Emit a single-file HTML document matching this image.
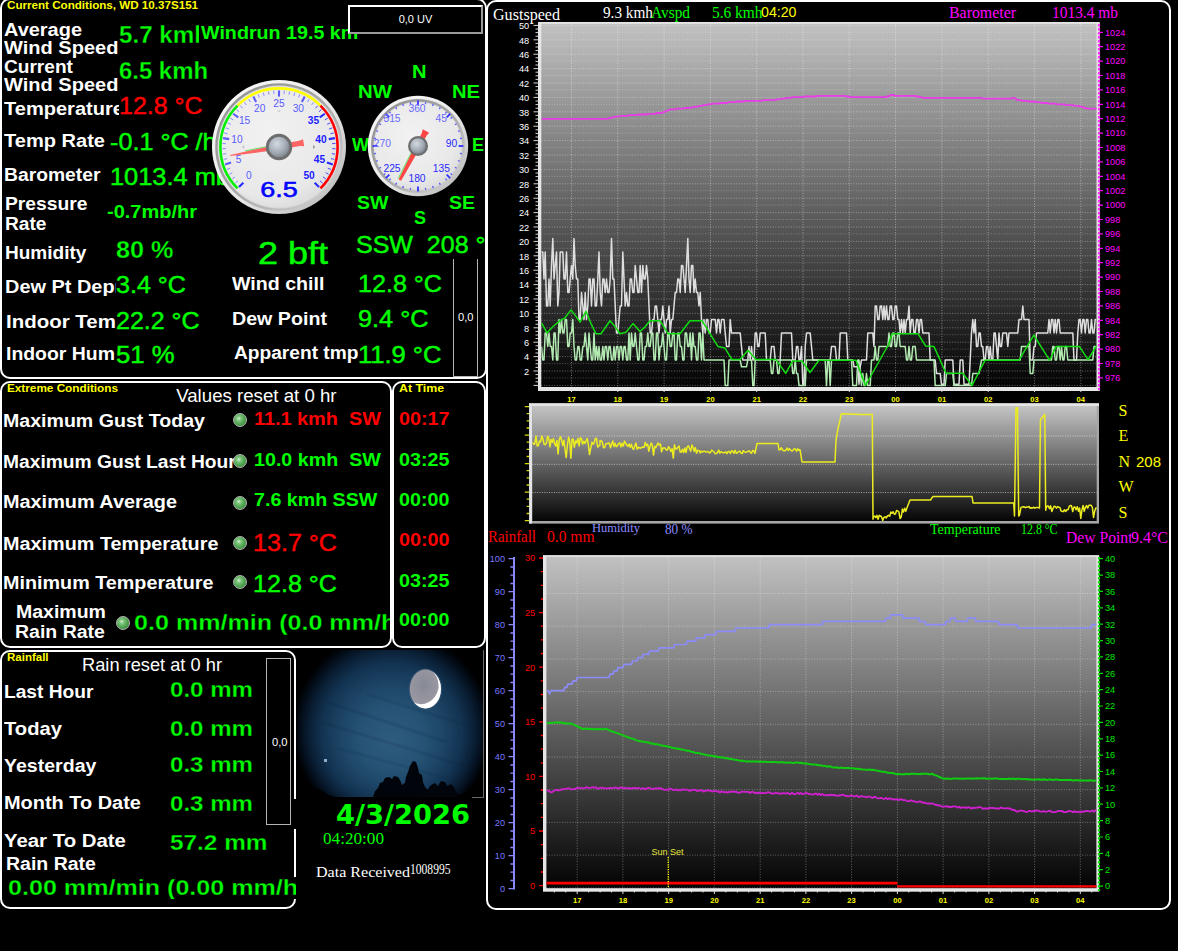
<!DOCTYPE html>
<html lang="en"><head><meta charset="utf-8"><title>Weather Display</title>
<style>
html,body{margin:0;padding:0;background:#000;}
body{width:1178px;height:951px;position:relative;overflow:hidden;font-family:"Liberation Sans",sans-serif;}
.t{position:absolute;white-space:pre;}
.sx{display:inline-block;transform-origin:0 50%;}
.abs{position:absolute;}
.er{-webkit-text-stroke:0.3px #000;}
.fat{-webkit-text-stroke-width:0.45px;}
.panel{position:absolute;box-sizing:border-box;border:2px solid #fff;border-radius:10px;background:#000;}
.led{position:absolute;border-radius:50%;box-sizing:border-box;border:1px solid #b4b4b4;background:radial-gradient(circle at 40% 38%,#d4f0d4 0,#7cc47c 22%,#4ea24e 55%,#357a35 100%);}
.uv{position:absolute;box-sizing:border-box;border:2px solid #fff;border-right-color:#9a9a9a;border-bottom-color:#9a9a9a;background:#000;color:#fff;font-size:11px;line-height:25px;text-align:center;}
.bar{position:absolute;box-sizing:border-box;border:1px solid #8c8c8c;background:#000;}
</style></head>
<body>
<div class="panel" style="left:485.5px;top:0;width:685.5px;height:910px"></div>
<div class="panel" style="left:0;top:-2px;width:486.5px;height:381px"></div>
<div class="t ttl" style="left:7.1px;top:0.0px;font-size:11px;line-height:11px;color:#ffff00;font-weight:bold;"><span class="sx" style="transform:scaleX(1.056)">Current Conditions, WD 10.37S151</span></div>
<div class="t " style="left:4.0px;top:20.5px;font-size:18.67px;line-height:18.67px;color:#ffffff;font-weight:bold;"><span class="sx" style="transform:scaleX(1.069)">Average</span></div>
<div class="t " style="left:4.0px;top:38.5px;font-size:18.67px;line-height:18.67px;color:#ffffff;font-weight:bold;"><span class="sx" style="transform:scaleX(1.073)">Wind Speed</span></div>
<div class="t " style="left:4.0px;top:57.5px;font-size:18.67px;line-height:18.67px;color:#ffffff;font-weight:bold;"><span class="sx" style="transform:scaleX(1.023)">Current</span></div>
<div class="t " style="left:4.0px;top:75.5px;font-size:18.67px;line-height:18.67px;color:#ffffff;font-weight:bold;"><span class="sx" style="transform:scaleX(1.073)">Wind Speed</span></div>
<div class="t " style="left:4.0px;top:132.0px;font-size:18.67px;line-height:18.67px;color:#ffffff;font-weight:bold;"><span class="sx" style="transform:scaleX(1.074)">Temp Rate</span></div>
<div class="t " style="left:4.0px;top:165.5px;font-size:18.67px;line-height:18.67px;color:#ffffff;font-weight:bold;"><span class="sx" style="transform:scaleX(1.033)">Barometer</span></div>
<div class="t " style="left:4.5px;top:194.8px;font-size:18.67px;line-height:18.67px;color:#ffffff;font-weight:bold;"><span class="sx" style="transform:scaleX(1.032)">Pressure</span></div>
<div class="t " style="left:4.5px;top:214.8px;font-size:18.67px;line-height:18.67px;color:#ffffff;font-weight:bold;"><span class="sx" style="transform:scaleX(1.025)">Rate</span></div>
<div class="t " style="left:4.5px;top:244.0px;font-size:18.67px;line-height:18.67px;color:#ffffff;font-weight:bold;"><span class="sx" style="transform:scaleX(1.020)">Humidity</span></div>
<div class="t " style="left:6.4px;top:344.9px;font-size:18.67px;line-height:18.67px;color:#ffffff;font-weight:bold;"><span class="sx" style="transform:scaleX(1.041)">Indoor Hum</span></div>
<div class="t " style="left:4.0px;top:100.1px;font-size:18.67px;line-height:18.67px;color:#ffffff;font-weight:bold;width:115.0px;overflow:hidden;"><span class="sx" style="transform:scaleX(1.074)">Temperature</span></div>
<div class="t " style="left:4.5px;top:277.5px;font-size:18.67px;line-height:18.67px;color:#ffffff;font-weight:bold;width:111.2px;overflow:hidden;"><span class="sx" style="transform:scaleX(1.068)">Dew Pt Depr</span></div>
<div class="t " style="left:6.4px;top:313.0px;font-size:18.67px;line-height:18.67px;color:#ffffff;font-weight:bold;width:109.3px;overflow:hidden;"><span class="sx" style="transform:scaleX(1.097)">Indoor Temp</span></div>
<div class="t er" style="left:119.2px;top:22.9px;font-size:24px;line-height:24px;color:#00ff00;font-weight:bold;width:80.2px;overflow:hidden;"><span class="sx" style="transform:scaleX(1.007)">5.7 kmh</span></div>
<div class="t " style="left:201.2px;top:23.8px;font-size:18.67px;line-height:18.67px;color:#00ff00;font-weight:bold;"><span class="sx" style="transform:scaleX(1.055)">Windrun 19.5 km</span></div>
<div class="t er" style="left:119.2px;top:58.7px;font-size:24px;line-height:24px;color:#00ff00;font-weight:bold;"><span class="sx" style="transform:scaleX(0.996)">6.5 kmh</span></div>
<div class="t fat" style="left:119.3px;top:93.6px;font-size:24px;line-height:24px;color:#ff0000;"><span class="sx" style="transform:scaleX(1.040)">12.8 °C</span></div>
<div class="t fat" style="left:110.3px;top:129.8px;font-size:24px;line-height:24px;color:#00ff00;"><span class="sx" style="transform:scaleX(1.049)">-0.1 °C /hr</span></div>
<div class="t fat" style="left:109.9px;top:164.6px;font-size:24px;line-height:24px;color:#00ff00;"><span class="sx" style="transform:scaleX(1.058)">1013.4 mb</span></div>
<div class="t " style="left:106.6px;top:202.7px;font-size:18.67px;line-height:18.67px;color:#00ff00;font-weight:bold;"><span class="sx" style="transform:scaleX(1.071)">-0.7mb/hr</span></div>
<div class="t er" style="left:116.0px;top:237.9px;font-size:24px;line-height:24px;color:#00ff00;font-weight:bold;"><span class="sx" style="transform:scaleX(1.051)">80 %</span></div>
<div class="t fat" style="left:116.0px;top:273.0px;font-size:24px;line-height:24px;color:#00ff00;"><span class="sx" style="transform:scaleX(1.045)">3.4 °C</span></div>
<div class="t fat" style="left:116.0px;top:308.9px;font-size:24px;line-height:24px;color:#00ff00;"><span class="sx" style="transform:scaleX(1.040)">22.2 °C</span></div>
<div class="t fat" style="left:115.6px;top:342.7px;font-size:24px;line-height:24px;color:#00ff00;"><span class="sx" style="transform:scaleX(1.069)">51 %</span></div>
<div class="t fat" style="left:257.8px;top:236.9px;font-size:32px;line-height:32px;color:#00ff00;"><span class="sx" style="transform:scaleX(1.124)">2 bft</span></div>
<div class="t fat" style="left:355.6px;top:232.7px;font-size:24px;line-height:24px;color:#00ff00;"><span class="sx" style="transform:scaleX(1.042)">SSW  208 °</span></div>
<div class="t " style="left:231.5px;top:275.3px;font-size:18.67px;line-height:18.67px;color:#ffffff;font-weight:bold;"><span class="sx" style="transform:scaleX(1.051)">Wind chill</span></div>
<div class="t " style="left:231.5px;top:309.6px;font-size:18.67px;line-height:18.67px;color:#ffffff;font-weight:bold;"><span class="sx" style="transform:scaleX(1.053)">Dew Point</span></div>
<div class="t " style="left:233.8px;top:344.0px;font-size:18.67px;line-height:18.67px;color:#ffffff;font-weight:bold;"><span class="sx" style="transform:scaleX(1.026)">Apparent tmp</span></div>
<div class="t fat" style="left:357.6px;top:271.6px;font-size:24px;line-height:24px;color:#00ff00;"><span class="sx" style="transform:scaleX(1.046)">12.8 °C</span></div>
<div class="t fat" style="left:357.6px;top:306.7px;font-size:24px;line-height:24px;color:#00ff00;"><span class="sx" style="transform:scaleX(1.053)">9.4 °C</span></div>
<div class="t fat" style="left:358.4px;top:342.7px;font-size:24px;line-height:24px;color:#00ff00;"><span class="sx" style="transform:scaleX(1.063)">11.9 °C</span></div>
<div class="t " style="left:411.7px;top:62.9px;font-size:18.67px;line-height:18.67px;color:#00ff00;font-weight:bold;"><span class="sx" style="transform:scaleX(1.075)">N</span></div>
<div class="t " style="left:357.5px;top:82.6px;font-size:18.67px;line-height:18.67px;color:#00ff00;font-weight:bold;"><span class="sx" style="transform:scaleX(1.093)">NW</span></div>
<div class="t " style="left:451.6px;top:82.6px;font-size:18.67px;line-height:18.67px;color:#00ff00;font-weight:bold;"><span class="sx" style="transform:scaleX(1.080)">NE</span></div>
<div class="t " style="left:351.8px;top:136.2px;font-size:18.67px;line-height:18.67px;color:#00ff00;font-weight:bold;"><span class="sx" style="transform:scaleX(0.965)">W</span></div>
<div class="t " style="left:472.2px;top:136.2px;font-size:18.67px;line-height:18.67px;color:#00ff00;font-weight:bold;"><span class="sx" style="transform:scaleX(0.964)">E</span></div>
<div class="t " style="left:357.2px;top:194.4px;font-size:18.67px;line-height:18.67px;color:#00ff00;font-weight:bold;"><span class="sx" style="transform:scaleX(1.047)">SW</span></div>
<div class="t " style="left:448.9px;top:194.4px;font-size:18.67px;line-height:18.67px;color:#00ff00;font-weight:bold;"><span class="sx" style="transform:scaleX(1.044)">SE</span></div>
<div class="t " style="left:414.0px;top:209.2px;font-size:18.67px;line-height:18.67px;color:#00ff00;font-weight:bold;"><span class="sx" style="transform:scaleX(0.964)">S</span></div>
<div class="uv" style="left:348px;top:5px;width:135px;height:29px"><span>0,0 UV</span></div>
<div class="bar" style="left:453px;top:258.5px;width:24.6px;height:118.5px;border-top:none;border-color:#b4b4b4"></div>
<div class="t " style="left:458.4px;top:312.0px;font-size:11px;line-height:11px;color:#ffffff;"><span class="sx" style="transform:scaleX(1.014)">0,0</span></div>
<div class="panel" style="left:0;top:381px;width:392.3px;height:267px"></div>
<div class="panel" style="left:391.9px;top:381px;width:94.6px;height:267px"></div>
<div class="t ttl" style="left:7.1px;top:383.0px;font-size:11px;line-height:11px;color:#ffff00;font-weight:bold;"><span class="sx" style="transform:scaleX(1.068)">Extreme Conditions</span></div>
<div class="t ttl" style="left:398.9px;top:383.0px;font-size:11px;line-height:11px;color:#ffff00;font-weight:bold;"><span class="sx" style="transform:scaleX(1.121)">At Time</span></div>
<div class="t " style="left:176.2px;top:386.5px;font-size:18.67px;line-height:18.67px;color:#ffffff;"><span class="sx" style="transform:scaleX(1.000)">Values reset at 0 hr</span></div>
<div class="t " style="left:3.4px;top:412.4px;font-size:18.67px;line-height:18.67px;color:#ffffff;font-weight:bold;"><span class="sx" style="transform:scaleX(1.049)">Maximum Gust Today</span></div>
<div class="t " style="left:3.4px;top:453.1px;font-size:18.67px;line-height:18.67px;color:#ffffff;font-weight:bold;"><span class="sx" style="transform:scaleX(1.030)">Maximum Gust Last Hour</span></div>
<div class="t " style="left:3.4px;top:493.4px;font-size:18.67px;line-height:18.67px;color:#ffffff;font-weight:bold;"><span class="sx" style="transform:scaleX(1.064)">Maximum Average</span></div>
<div class="t " style="left:3.4px;top:534.6px;font-size:18.67px;line-height:18.67px;color:#ffffff;font-weight:bold;"><span class="sx" style="transform:scaleX(1.062)">Maximum Temperature</span></div>
<div class="t " style="left:3.4px;top:574.4px;font-size:18.67px;line-height:18.67px;color:#ffffff;font-weight:bold;"><span class="sx" style="transform:scaleX(1.059)">Minimum Temperature</span></div>
<div class="t " style="left:16.2px;top:602.6px;font-size:18.67px;line-height:18.67px;color:#ffffff;font-weight:bold;"><span class="sx" style="transform:scaleX(1.045)">Maximum</span></div>
<div class="t " style="left:15.3px;top:623.3px;font-size:18.67px;line-height:18.67px;color:#ffffff;font-weight:bold;"><span class="sx" style="transform:scaleX(1.045)">Rain Rate</span></div>
<div class="t " style="left:254.4px;top:410.2px;font-size:18.67px;line-height:18.67px;color:#ff0000;font-weight:bold;"><span class="sx" style="transform:scaleX(1.064)">11.1 kmh  SW</span></div>
<div class="t " style="left:254.4px;top:450.5px;font-size:18.67px;line-height:18.67px;color:#00ff00;font-weight:bold;"><span class="sx" style="transform:scaleX(1.055)">10.0 kmh  SW</span></div>
<div class="t " style="left:254.4px;top:491.1px;font-size:18.67px;line-height:18.67px;color:#00ff00;font-weight:bold;"><span class="sx" style="transform:scaleX(1.053)">7.6 kmh SSW</span></div>
<div class="t fat" style="left:252.8px;top:530.9px;font-size:24px;line-height:24px;color:#ff0000;"><span class="sx" style="transform:scaleX(1.046)">13.7 °C</span></div>
<div class="t fat" style="left:252.8px;top:571.9px;font-size:24px;line-height:24px;color:#00ff00;"><span class="sx" style="transform:scaleX(1.046)">12.8 °C</span></div>
<div class="t er" style="left:134.2px;top:612.4px;font-size:22.5px;line-height:22.5px;color:#00ff00;font-weight:bold;width:256.3px;overflow:hidden;"><span class="sx" style="transform:scaleX(1.116)">0.0 mm/min (0.0 mm/hr</span></div>
<div class="led" style="left:232.8px;top:413.0px;width:14px;height:14px"></div>
<div class="led" style="left:232.8px;top:454.0px;width:14px;height:14px"></div>
<div class="led" style="left:232.8px;top:495.5px;width:14px;height:14px"></div>
<div class="led" style="left:232.8px;top:536.4px;width:14px;height:14px"></div>
<div class="led" style="left:232.8px;top:574.7px;width:14px;height:14px"></div>
<div class="led" style="left:115.7px;top:615.8px;width:14px;height:14px"></div>
<div class="t " style="left:398.7px;top:410.2px;font-size:18.67px;line-height:18.67px;color:#ff0000;font-weight:bold;"><span class="sx" style="transform:scaleX(1.058)">00:17</span></div>
<div class="t " style="left:398.7px;top:450.5px;font-size:18.67px;line-height:18.67px;color:#00ff00;font-weight:bold;"><span class="sx" style="transform:scaleX(1.058)">03:25</span></div>
<div class="t " style="left:398.7px;top:491.1px;font-size:18.67px;line-height:18.67px;color:#00ff00;font-weight:bold;"><span class="sx" style="transform:scaleX(1.058)">00:00</span></div>
<div class="t " style="left:398.7px;top:531.4px;font-size:18.67px;line-height:18.67px;color:#ff0000;font-weight:bold;"><span class="sx" style="transform:scaleX(1.058)">00:00</span></div>
<div class="t " style="left:398.7px;top:572.0px;font-size:18.67px;line-height:18.67px;color:#00ff00;font-weight:bold;"><span class="sx" style="transform:scaleX(1.058)">03:25</span></div>
<div class="t " style="left:398.7px;top:611.4px;font-size:18.67px;line-height:18.67px;color:#00ff00;font-weight:bold;"><span class="sx" style="transform:scaleX(1.058)">00:00</span></div>
<div class="panel" style="left:0;top:650px;width:296px;height:259px"></div>
<div class="t ttl" style="left:7.1px;top:652.0px;font-size:11px;line-height:11px;color:#ffff00;font-weight:bold;"><span class="sx" style="transform:scaleX(1.045)">Rainfall</span></div>
<div class="t " style="left:82.3px;top:655.5px;font-size:18.67px;line-height:18.67px;color:#ffffff;"><span class="sx" style="transform:scaleX(0.978)">Rain reset at 0 hr</span></div>
<div class="t " style="left:4.3px;top:682.9px;font-size:18.67px;line-height:18.67px;color:#ffffff;font-weight:bold;"><span class="sx" style="transform:scaleX(1.027)">Last Hour</span></div>
<div class="t " style="left:4.3px;top:719.8px;font-size:18.67px;line-height:18.67px;color:#ffffff;font-weight:bold;"><span class="sx" style="transform:scaleX(1.082)">Today</span></div>
<div class="t " style="left:4.3px;top:756.7px;font-size:18.67px;line-height:18.67px;color:#ffffff;font-weight:bold;"><span class="sx" style="transform:scaleX(1.048)">Yesterday</span></div>
<div class="t " style="left:4.3px;top:794.2px;font-size:18.67px;line-height:18.67px;color:#ffffff;font-weight:bold;"><span class="sx" style="transform:scaleX(1.068)">Month To Date</span></div>
<div class="t " style="left:4.3px;top:832.0px;font-size:18.67px;line-height:18.67px;color:#ffffff;font-weight:bold;"><span class="sx" style="transform:scaleX(1.092)">Year To Date</span></div>
<div class="t " style="left:6.2px;top:854.7px;font-size:18.67px;line-height:18.67px;color:#ffffff;font-weight:bold;"><span class="sx" style="transform:scaleX(1.045)">Rain Rate</span></div>
<div class="t er" style="left:170.3px;top:679.2px;font-size:22.4px;line-height:22.4px;color:#00ff00;font-weight:bold;"><span class="sx" style="transform:scaleX(1.075)">0.0 mm</span></div>
<div class="t er" style="left:170.3px;top:717.5px;font-size:22.4px;line-height:22.4px;color:#00ff00;font-weight:bold;"><span class="sx" style="transform:scaleX(1.075)">0.0 mm</span></div>
<div class="t er" style="left:170.3px;top:754.2px;font-size:22.4px;line-height:22.4px;color:#00ff00;font-weight:bold;"><span class="sx" style="transform:scaleX(1.075)">0.3 mm</span></div>
<div class="t er" style="left:170.3px;top:792.7px;font-size:22.4px;line-height:22.4px;color:#00ff00;font-weight:bold;"><span class="sx" style="transform:scaleX(1.075)">0.3 mm</span></div>
<div class="t er" style="left:170.3px;top:832.2px;font-size:22.4px;line-height:22.4px;color:#00ff00;font-weight:bold;"><span class="sx" style="transform:scaleX(1.088)">57.2 mm</span></div>
<div class="t er" style="left:7.6px;top:876.5px;font-size:22px;line-height:22px;color:#00ff00;font-weight:bold;width:288.4px;overflow:hidden;background:#000;"><span class="sx" style="transform:scaleX(1.141)">0.00 mm/min (0.00 mm/hr</span></div>
<div class="bar" style="left:266px;top:657.5px;width:25.2px;height:167px;border-color:#b4b4b4"></div>
<div class="t " style="left:272.0px;top:736.8px;font-size:11px;line-height:11px;color:#ffffff;"><span class="sx" style="transform:scaleX(1.014)">0,0</span></div>
<div class="abs" style="left:293px;top:799px;width:4px;height:30px;background:#000"></div>
<div class="t " style="left:336.2px;top:801.9px;font-size:26.6px;line-height:26.6px;color:#00ff00;font-weight:bold;font-family:'DejaVu Sans','Liberation Sans',sans-serif;"><span class="sx" style="transform:scaleX(1.027)">4/3/2026</span></div>
<div class="t " style="left:322.8px;top:831.3px;font-size:16px;line-height:16px;color:#00ff00;font-family:'Liberation Serif',serif;"><span class="sx" style="transform:scaleX(1.072)">04:20:00</span></div>
<div class="t " style="left:315.8px;top:865.4px;font-size:15px;line-height:15px;color:#ffffff;font-family:'Liberation Serif',serif;"><span class="sx" style="transform:scaleX(1.070)">Data Received</span></div>
<div class="t " style="left:409.7px;top:862.7px;font-size:14px;line-height:14px;color:#ffffff;font-family:'Liberation Serif',serif;"><span class="sx" style="transform:scaleX(0.827)">1008995</span></div>
<svg class="abs" style="left:209px;top:77px" width="140" height="140" viewBox="0 0 140 140" font-family="Liberation Sans, sans-serif"><defs>
<linearGradient id="gz1" x1="0" y1="0" x2="1" y2="1"><stop offset="0" stop-color="#fafafa"/><stop offset=".55" stop-color="#e8e8e8"/><stop offset="1" stop-color="#b0b0b0"/></linearGradient>
<linearGradient id="gz2" x1="0" y1="0" x2="1" y2="1"><stop offset="0" stop-color="#8e8e8e"/><stop offset=".5" stop-color="#a6a6a6"/><stop offset="1" stop-color="#d8d8d8"/></linearGradient>
<radialGradient id="gface" cx=".42" cy=".38" r=".75"><stop offset="0" stop-color="#f2f2f2"/><stop offset=".7" stop-color="#e8e8e8"/><stop offset="1" stop-color="#d2d2d2"/></radialGradient>
<radialGradient id="ghub" cx=".4" cy=".35" r=".7"><stop offset="0" stop-color="#d4dae0"/><stop offset=".6" stop-color="#a4acb6"/><stop offset="1" stop-color="#7c838c"/></radialGradient>
</defs><circle cx="70" cy="70" r="67" fill="url(#gz1)"/><circle cx="70" cy="70" r="63.8" fill="url(#gz2)"/><circle cx="70" cy="70" r="61.4" fill="#d6d6d6"/><circle cx="70" cy="70" r="60.6" fill="url(#gface)"/><path d="M28.56,111.44A58.6,58.6 0 0 1 28.56,28.56" stroke="#00f000" stroke-width="2.6" fill="none"/><path d="M28.56,28.56A58.6,58.6 0 0 1 111.44,28.56" stroke="#ffff00" stroke-width="2.6" fill="none"/><path d="M111.44,28.56A58.6,58.6 0 0 1 111.44,111.44" stroke="#ff0000" stroke-width="2.6" fill="none"/><line x1="34.36" y1="105.64" x2="29.98" y2="110.02" stroke="#2a2aff" stroke-width="2.1"/><line x1="29.01" y1="103.91" x2="26.39" y2="106.08" stroke="#8c8cff" stroke-width="1"/><line x1="26.00" y1="99.90" x2="23.19" y2="101.81" stroke="#8c8cff" stroke-width="1"/><line x1="23.38" y1="95.63" x2="20.40" y2="97.27" stroke="#8c8cff" stroke-width="1"/><line x1="21.18" y1="91.13" x2="18.06" y2="92.48" stroke="#8c8cff" stroke-width="1"/><line x1="22.07" y1="85.57" x2="16.17" y2="87.49" stroke="#5c5cff" stroke-width="2.1"/><line x1="18.08" y1="81.61" x2="14.76" y2="82.35" stroke="#8c8cff" stroke-width="1"/><line x1="17.22" y1="76.67" x2="13.85" y2="77.09" stroke="#8c8cff" stroke-width="1"/><line x1="16.83" y1="71.67" x2="13.43" y2="71.78" stroke="#8c8cff" stroke-width="1"/><line x1="16.90" y1="66.66" x2="13.51" y2="66.45" stroke="#8c8cff" stroke-width="1"/><line x1="20.22" y1="62.12" x2="14.10" y2="61.15" stroke="#5c5cff" stroke-width="2.1"/><line x1="18.47" y1="56.77" x2="15.18" y2="55.92" stroke="#8c8cff" stroke-width="1"/><line x1="19.95" y1="51.98" x2="16.75" y2="50.83" stroke="#8c8cff" stroke-width="1"/><line x1="21.86" y1="47.35" x2="18.79" y2="45.90" stroke="#8c8cff" stroke-width="1"/><line x1="24.21" y1="42.92" x2="21.28" y2="41.19" stroke="#8c8cff" stroke-width="1"/><line x1="29.23" y1="40.38" x2="24.21" y2="36.73" stroke="#5c5cff" stroke-width="2.1"/><line x1="30.09" y1="34.82" x2="27.54" y2="32.57" stroke="#8c8cff" stroke-width="1"/><line x1="33.58" y1="31.22" x2="31.25" y2="28.74" stroke="#8c8cff" stroke-width="1"/><line x1="37.39" y1="27.96" x2="35.31" y2="25.28" stroke="#8c8cff" stroke-width="1"/><line x1="41.49" y1="25.08" x2="39.67" y2="22.21" stroke="#8c8cff" stroke-width="1"/><line x1="47.12" y1="25.09" x2="44.30" y2="19.57" stroke="#5c5cff" stroke-width="2.1"/><line x1="50.42" y1="20.54" x2="49.16" y2="17.37" stroke="#8c8cff" stroke-width="1"/><line x1="55.16" y1="18.91" x2="54.21" y2="15.65" stroke="#8c8cff" stroke-width="1"/><line x1="60.03" y1="17.74" x2="59.39" y2="14.40" stroke="#8c8cff" stroke-width="1"/><line x1="64.99" y1="17.04" x2="64.67" y2="13.65" stroke="#8c8cff" stroke-width="1"/><line x1="70.00" y1="19.60" x2="70.00" y2="13.40" stroke="#5c5cff" stroke-width="2.1"/><line x1="75.01" y1="17.04" x2="75.33" y2="13.65" stroke="#8c8cff" stroke-width="1"/><line x1="79.97" y1="17.74" x2="80.61" y2="14.40" stroke="#8c8cff" stroke-width="1"/><line x1="84.84" y1="18.91" x2="85.79" y2="15.65" stroke="#8c8cff" stroke-width="1"/><line x1="89.58" y1="20.54" x2="90.84" y2="17.37" stroke="#8c8cff" stroke-width="1"/><line x1="92.88" y1="25.09" x2="95.70" y2="19.57" stroke="#5c5cff" stroke-width="2.1"/><line x1="98.51" y1="25.08" x2="100.33" y2="22.21" stroke="#8c8cff" stroke-width="1"/><line x1="102.61" y1="27.96" x2="104.69" y2="25.28" stroke="#8c8cff" stroke-width="1"/><line x1="106.42" y1="31.22" x2="108.75" y2="28.74" stroke="#4a4aff" stroke-width="1"/><line x1="109.91" y1="34.82" x2="112.46" y2="32.57" stroke="#4a4aff" stroke-width="1"/><line x1="110.77" y1="40.38" x2="115.79" y2="36.73" stroke="#2a2aff" stroke-width="2.1"/><line x1="115.79" y1="42.92" x2="118.72" y2="41.19" stroke="#4a4aff" stroke-width="1"/><line x1="118.14" y1="47.35" x2="121.21" y2="45.90" stroke="#4a4aff" stroke-width="1"/><line x1="120.05" y1="51.98" x2="123.25" y2="50.83" stroke="#4a4aff" stroke-width="1"/><line x1="121.53" y1="56.77" x2="124.82" y2="55.92" stroke="#4a4aff" stroke-width="1"/><line x1="119.78" y1="62.12" x2="125.90" y2="61.15" stroke="#2a2aff" stroke-width="2.1"/><line x1="123.10" y1="66.66" x2="126.49" y2="66.45" stroke="#4a4aff" stroke-width="1"/><line x1="123.17" y1="71.67" x2="126.57" y2="71.78" stroke="#4a4aff" stroke-width="1"/><line x1="122.78" y1="76.67" x2="126.15" y2="77.09" stroke="#4a4aff" stroke-width="1"/><line x1="121.92" y1="81.61" x2="125.24" y2="82.35" stroke="#4a4aff" stroke-width="1"/><line x1="117.93" y1="85.57" x2="123.83" y2="87.49" stroke="#2a2aff" stroke-width="2.1"/><line x1="118.82" y1="91.13" x2="121.94" y2="92.48" stroke="#4a4aff" stroke-width="1"/><line x1="116.62" y1="95.63" x2="119.60" y2="97.27" stroke="#4a4aff" stroke-width="1"/><line x1="114.00" y1="99.90" x2="116.81" y2="101.81" stroke="#4a4aff" stroke-width="1"/><line x1="110.99" y1="103.91" x2="113.61" y2="106.08" stroke="#4a4aff" stroke-width="1"/><line x1="105.64" y1="105.64" x2="110.02" y2="110.02" stroke="#2a2aff" stroke-width="2.1"/><text x="39.9" y="102.4" font-size="10.2" fill="#5a5aff" text-anchor="middle">0</text><text x="29.6" y="85.5" font-size="10.2" fill="#5a5aff" text-anchor="middle">5</text><text x="28.0" y="65.7" font-size="10.2" fill="#5a5aff" text-anchor="middle">10</text><text x="35.6" y="47.4" font-size="10.2" fill="#5a5aff" text-anchor="middle">15</text><text x="50.7" y="34.5" font-size="10.2" fill="#5a5aff" text-anchor="middle">20</text><text x="70.0" y="29.9" font-size="10.2" fill="#5a5aff" text-anchor="middle">25</text><text x="89.3" y="34.5" font-size="10.2" fill="#5a5aff" text-anchor="middle">30</text><text x="104.4" y="47.4" font-size="10.2" fill="#1c1cff" text-anchor="middle" font-weight="bold">35</text><text x="112.0" y="65.7" font-size="10.2" fill="#1c1cff" text-anchor="middle" font-weight="bold">40</text><text x="110.4" y="85.5" font-size="10.2" fill="#1c1cff" text-anchor="middle" font-weight="bold">45</text><text x="100.1" y="102.4" font-size="10.2" fill="#1c1cff" text-anchor="middle" font-weight="bold">50</text><path d="M33,70l2.2,-2.2v4.4z M70,35l-2.2,-1.6h4.4z" fill="#c4c4c4"/><path d="M104,68l2.4,2l-2.4,2z" fill="#9a9a9a"/><text x="70" y="119.6" font-size="22" fill="#0000ff" stroke="#0000ff" stroke-width=".55" text-anchor="middle" textLength="37.5" lengthAdjust="spacingAndGlyphs">6.5</text><line x1="36.18" y1="73.97" x2="61.67" y2="68.81" stroke="#58e058" stroke-width="1"/><polygon points="21.13,77.92 69.55,67.44 90.21,63.63 94.01,62.16 95.25,69.25 91.13,68.95 70.45,72.56 21.34,79.10" fill="#ff6464"/><circle cx="70" cy="70" r="13.2" fill="#6e6e6e"/><circle cx="70" cy="70" r="10.3" fill="url(#ghub)"/></svg>
<svg class="abs" style="left:366px;top:93.8px" width="104" height="104" viewBox="0 0 104 104" font-family="Liberation Sans, sans-serif"><circle cx="52" cy="52" r="50.2" fill="url(#gz1)"/><circle cx="52" cy="52" r="47.0" fill="url(#gz2)"/><circle cx="52" cy="52" r="44.6" fill="#d6d6d6"/><circle cx="52" cy="52" r="43.800000000000004" fill="url(#gface)"/><line x1="59.40" y1="10.05" x2="59.74" y2="8.08" stroke="#5a5aff" stroke-width="1.3"/><line x1="66.57" y1="11.97" x2="67.25" y2="10.09" stroke="#5a5aff" stroke-width="1.3"/><line x1="73.30" y1="15.11" x2="74.30" y2="13.38" stroke="#5a5aff" stroke-width="1.3"/><line x1="79.38" y1="19.37" x2="80.67" y2="17.83" stroke="#5a5aff" stroke-width="1.3"/><line x1="84.63" y1="24.62" x2="86.17" y2="23.33" stroke="#5a5aff" stroke-width="1.3"/><line x1="88.89" y1="30.70" x2="90.62" y2="29.70" stroke="#5a5aff" stroke-width="1.3"/><line x1="92.03" y1="37.43" x2="93.91" y2="36.75" stroke="#5a5aff" stroke-width="1.3"/><line x1="93.95" y1="44.60" x2="95.92" y2="44.26" stroke="#5a5aff" stroke-width="1.3"/><line x1="93.95" y1="59.40" x2="95.92" y2="59.74" stroke="#5a5aff" stroke-width="1.3"/><line x1="92.03" y1="66.57" x2="93.91" y2="67.25" stroke="#5a5aff" stroke-width="1.3"/><line x1="88.89" y1="73.30" x2="90.62" y2="74.30" stroke="#5a5aff" stroke-width="1.3"/><line x1="84.63" y1="79.38" x2="86.17" y2="80.67" stroke="#5a5aff" stroke-width="1.3"/><line x1="79.38" y1="84.63" x2="80.67" y2="86.17" stroke="#5a5aff" stroke-width="1.3"/><line x1="73.30" y1="88.89" x2="74.30" y2="90.62" stroke="#5a5aff" stroke-width="1.3"/><line x1="66.57" y1="92.03" x2="67.25" y2="93.91" stroke="#5a5aff" stroke-width="1.3"/><line x1="59.40" y1="93.95" x2="59.74" y2="95.92" stroke="#5a5aff" stroke-width="1.3"/><line x1="44.60" y1="93.95" x2="44.26" y2="95.92" stroke="#5a5aff" stroke-width="1.3"/><line x1="37.43" y1="92.03" x2="36.75" y2="93.91" stroke="#5a5aff" stroke-width="1.3"/><line x1="30.70" y1="88.89" x2="29.70" y2="90.62" stroke="#5a5aff" stroke-width="1.3"/><line x1="24.62" y1="84.63" x2="23.33" y2="86.17" stroke="#5a5aff" stroke-width="1.3"/><line x1="19.37" y1="79.38" x2="17.83" y2="80.67" stroke="#5a5aff" stroke-width="1.3"/><line x1="15.11" y1="73.30" x2="13.38" y2="74.30" stroke="#5a5aff" stroke-width="1.3"/><line x1="11.97" y1="66.57" x2="10.09" y2="67.25" stroke="#5a5aff" stroke-width="1.3"/><line x1="10.05" y1="59.40" x2="8.08" y2="59.74" stroke="#5a5aff" stroke-width="1.3"/><line x1="10.05" y1="44.60" x2="8.08" y2="44.26" stroke="#5a5aff" stroke-width="1.3"/><line x1="11.97" y1="37.43" x2="10.09" y2="36.75" stroke="#5a5aff" stroke-width="1.3"/><line x1="15.11" y1="30.70" x2="13.38" y2="29.70" stroke="#5a5aff" stroke-width="1.3"/><line x1="19.37" y1="24.62" x2="17.83" y2="23.33" stroke="#5a5aff" stroke-width="1.3"/><line x1="24.62" y1="19.37" x2="23.33" y2="17.83" stroke="#5a5aff" stroke-width="1.3"/><line x1="30.70" y1="15.11" x2="29.70" y2="13.38" stroke="#5a5aff" stroke-width="1.3"/><line x1="37.43" y1="11.97" x2="36.75" y2="10.09" stroke="#5a5aff" stroke-width="1.3"/><line x1="44.60" y1="10.05" x2="44.26" y2="8.08" stroke="#5a5aff" stroke-width="1.3"/><line x1="52.00" y1="11.40" x2="52.00" y2="6.60" stroke="#3030ff" stroke-width="1.8"/><line x1="80.71" y1="23.29" x2="84.10" y2="19.90" stroke="#3030ff" stroke-width="1.8"/><line x1="92.60" y1="52.00" x2="97.40" y2="52.00" stroke="#3030ff" stroke-width="1.8"/><line x1="80.71" y1="80.71" x2="84.10" y2="84.10" stroke="#3030ff" stroke-width="1.8"/><line x1="52.00" y1="92.60" x2="52.00" y2="97.40" stroke="#3030ff" stroke-width="1.8"/><line x1="23.29" y1="80.71" x2="19.90" y2="84.10" stroke="#3030ff" stroke-width="1.8"/><line x1="11.40" y1="52.00" x2="6.60" y2="52.00" stroke="#3030ff" stroke-width="1.8"/><line x1="23.29" y1="23.29" x2="19.90" y2="19.90" stroke="#3030ff" stroke-width="1.8"/><text x="51.0" y="18.3" font-size="10.3" fill="#6a6aff" text-anchor="middle">360</text><text x="75.3" y="28.3" font-size="10.3" fill="#6a6aff" text-anchor="middle">45</text><text x="85.4" y="53.4" font-size="10.3" fill="#2a2aff" text-anchor="middle">90</text><text x="75.3" y="78.1" font-size="10.3" fill="#2a2aff" text-anchor="middle">135</text><text x="51.0" y="87.7" font-size="10.3" fill="#2a2aff" text-anchor="middle">180</text><text x="26.0" y="78.1" font-size="10.3" fill="#2a2aff" text-anchor="middle">225</text><text x="16.4" y="53.4" font-size="10.3" fill="#6a6aff" text-anchor="middle">270</text><text x="26.0" y="28.3" font-size="10.3" fill="#6a6aff" text-anchor="middle">315</text><line x1="32.22" y1="84.52" x2="45.77" y2="57.75" stroke="#58e058" stroke-width="1"/><polygon points="32.64,85.42 49.62,50.73 55.72,39.25 56.80,35.30 63.16,38.68 60.49,41.79 54.38,53.27 35.11,86.74" fill="#ff4646"/><circle cx="52" cy="52" r="10" fill="#6e6e6e"/><circle cx="52" cy="52" r="7.8" fill="url(#ghub)"/></svg>
<svg class="abs" style="left:297px;top:650px" width="186" height="147" viewBox="0 0 186 147"><defs>
<radialGradient id="sky" gradientUnits="userSpaceOnUse" cx="95" cy="80" r="99" fx="95" fy="92"><stop offset="0" stop-color="#2e5c7e"/><stop offset=".3" stop-color="#275476"/><stop offset=".52" stop-color="#1d4566"/><stop offset=".7" stop-color="#133453"/><stop offset=".83" stop-color="#0a2036"/><stop offset=".93" stop-color="#030c18"/><stop offset="1" stop-color="#000"/></radialGradient>
<radialGradient id="mn" cx=".45" cy=".4" r=".7"><stop offset="0" stop-color="#868a94"/><stop offset=".7" stop-color="#9a98a2"/><stop offset="1" stop-color="#b4aeb8"/></radialGradient>
<clipPath id="mclip"><ellipse cx="128.4" cy="39" rx="15.6" ry="19.5"/></clipPath>
</defs><rect width="186" height="147" fill="#000"/><rect width="186" height="147" fill="url(#sky)"/><line x1="30" y1="52" x2="150" y2="92" stroke="#0c2642" stroke-opacity="0.16" stroke-width="3"/><line x1="24" y1="72" x2="168" y2="116" stroke="#0c2642" stroke-opacity="0.14" stroke-width="3"/><line x1="40" y1="98" x2="150" y2="128" stroke="#0c2642" stroke-opacity="0.12" stroke-width="3"/><line x1="70" y1="44" x2="172" y2="76" stroke="#0c2642" stroke-opacity="0.12" stroke-width="3"/><ellipse cx="128.4" cy="39" rx="16.8" ry="20.6" fill="#3c5c7c" opacity=".6"/><ellipse cx="128.4" cy="39" rx="15.6" ry="19.5" fill="url(#mn)"/><g clip-path="url(#mclip)"><path d="M134,20a15.6,19.5 0 0 1 -8,38.5a15.6,19.5 0 0 1 -10,-6.5a18,21 0 0 0 25.5,-13.5a17,20 0 0 0 -7.5,-18.5z" fill="#ffffff"/></g><rect x="27" y="109" width="3" height="3" fill="#93aac6"/><path d="M76,147l2,-6l3,-3l2,-5l3,-1l2,-4l4,-1l3,2l2,-3l4,1l2,3l2,5l3,-2l1,-6l2,-5l2,-6l3,-5l3,1l2,6l1,5l3,2l1,7l2,5l3,3l1,6l3,3v3z" fill="#01040a"/><path d="M121,147l2,-4l3,-2l3,2l2,-4l3,-4l4,-2l3,3l3,-5l4,1l2,4l4,-2l3,3l2,5l3,2l2,4z" fill="#02060c"/><path d="M0,147v-14l10,2l12,4l10,6l6,2z M186,147v-16l-8,4l-8,6l-8,4l-4,2z" fill="#000"/></svg>
<div class="abs" style="left:483px;top:650px;width:1px;height:147px;background:#6a6a6a"></div><div class="abs" style="left:472px;top:797px;width:12px;height:1px;background:#6a6a6a"></div>
<div class="t " style="left:592.0px;top:520.8px;font-size:13px;line-height:13px;color:#8c8cff;font-family:'Liberation Serif',serif;"><span class="sx" style="transform:scaleX(0.963)">Humidity</span></div>
<div class="t " style="left:665.0px;top:522.6px;font-size:14px;line-height:14px;color:#8c8cff;font-family:'Liberation Serif',serif;"><span class="sx" style="transform:scaleX(0.943)">80 %</span></div>
<div class="t " style="left:492.6px;top:6.5px;font-size:16px;line-height:16px;color:#fff;font-family:'Liberation Serif',serif;"><span class="sx" style="transform:scaleX(1.005)">Gustspeed</span></div>
<div class="t " style="left:602.6px;top:4.8px;font-size:16px;line-height:16px;color:#fff;font-family:'Liberation Serif',serif;"><span class="sx" style="transform:scaleX(0.953)">9.3 kmh</span></div>
<div class="t " style="left:651.0px;top:4.8px;font-size:16px;line-height:16px;color:#00ff00;font-family:'Liberation Serif',serif;"><span class="sx" style="transform:scaleX(0.961)">Avspd</span></div>
<div class="t " style="left:711.6px;top:4.8px;font-size:16px;line-height:16px;color:#00ff00;font-family:'Liberation Serif',serif;"><span class="sx" style="transform:scaleX(0.963)">5.6 kmh</span></div>
<div class="t " style="left:761.0px;top:3.8px;font-size:15px;line-height:15px;color:#ffff00;"><span class="sx" style="transform:scaleX(0.946)">04:20</span></div>
<div class="t " style="left:948.7px;top:4.8px;font-size:16px;line-height:16px;color:#ff00ff;font-family:'Liberation Serif',serif;"><span class="sx" style="transform:scaleX(0.992)">Barometer</span></div>
<div class="t " style="left:1052.0px;top:4.8px;font-size:16px;line-height:16px;color:#ff00ff;font-family:'Liberation Serif',serif;"><span class="sx" style="transform:scaleX(0.964)">1013.4 mb</span></div>
<div class="t " style="left:487.6px;top:529.4px;font-size:16px;line-height:16px;color:#ff0000;font-family:'Liberation Serif',serif;"><span class="sx" style="transform:scaleX(0.931)">Rainfall</span></div>
<div class="t " style="left:547.4px;top:529.4px;font-size:16px;line-height:16px;color:#ff0000;font-family:'Liberation Serif',serif;"><span class="sx" style="transform:scaleX(0.972)">0.0 mm</span></div>
<div class="t " style="left:930.0px;top:523.0px;font-size:14px;line-height:14px;color:#00ff00;font-family:'Liberation Serif',serif;"><span class="sx" style="transform:scaleX(1.000)">Temperature</span></div>
<div class="t " style="left:1020.5px;top:523.0px;font-size:14px;line-height:14px;color:#00ff00;font-family:'Liberation Serif',serif;"><span class="sx" style="transform:scaleX(0.850)">12.8 °C</span></div>
<div class="t " style="left:1066.0px;top:530.0px;font-size:16px;line-height:16px;color:#ff00ff;font-family:'Liberation Serif',serif;"><span class="sx" style="transform:scaleX(0.978)">Dew Point</span></div>
<div class="t " style="left:1131.0px;top:530.0px;font-size:16px;line-height:16px;color:#ff00ff;font-family:'Liberation Serif',serif;background:#000;"><span class="sx" style="transform:scaleX(0.998)">9.4°C</span></div>
<svg class="abs" style="left:0;top:0" width="1178" height="951" viewBox="0 0 1178 951" font-family="Liberation Sans, sans-serif"><defs>
<linearGradient id="cg" x1="0" y1="0" x2="0" y2="1"><stop offset="0" stop-color="#c1c1c1"/><stop offset=".5" stop-color="#626262"/><stop offset="1" stop-color="#030303"/></linearGradient>
<linearGradient id="cg2" x1="0" y1="0" x2="0" y2="1"><stop offset="0" stop-color="#c4c4c4"/><stop offset=".5" stop-color="#646464"/><stop offset="1" stop-color="#050505"/></linearGradient>
<clipPath id="c1"><rect x="541.3" y="23.8" width="555.2" height="363.2"/></clipPath>
<clipPath id="c2"><rect x="532.3" y="406" width="564.4" height="115"/></clipPath>
<clipPath id="c3"><rect x="546.4" y="556.8" width="550" height="331.4"/></clipPath>
</defs><rect x="538" y="22" width="561.8" height="369" fill="#e6e6e6"/><rect x="541.3" y="23.8" width="555.2" height="363.2" fill="url(#cg)"/><path d="M541.3,25.4H1096.5M541.3,39.8H1096.5M541.3,54.2H1096.5M541.3,68.6H1096.5M541.3,83.0H1096.5M541.3,97.4H1096.5M541.3,111.8H1096.5M541.3,126.2H1096.5M541.3,140.6H1096.5M541.3,155.0H1096.5M541.3,169.4H1096.5M541.3,183.8H1096.5M541.3,198.2H1096.5M541.3,212.6H1096.5M541.3,227.0H1096.5M541.3,241.4H1096.5M541.3,255.8H1096.5M541.3,270.2H1096.5M541.3,284.6H1096.5M541.3,299.0H1096.5M541.3,313.4H1096.5M541.3,327.8H1096.5M541.3,342.2H1096.5M541.3,356.6H1096.5M541.3,371.0H1096.5M541.3,385.4H1096.5" stroke="#fff" stroke-opacity=".38" stroke-width="1" stroke-dasharray="1 1.6" fill="none"/><path d="M541.3,32.3H1096.5M541.3,46.7H1096.5M541.3,61.1H1096.5M541.3,75.5H1096.5M541.3,89.9H1096.5M541.3,104.3H1096.5M541.3,118.7H1096.5M541.3,133.1H1096.5M541.3,147.5H1096.5M541.3,161.9H1096.5M541.3,176.3H1096.5M541.3,190.7H1096.5M541.3,205.1H1096.5M541.3,219.5H1096.5M541.3,233.9H1096.5M541.3,248.3H1096.5M541.3,262.7H1096.5M541.3,277.1H1096.5M541.3,291.5H1096.5M541.3,305.9H1096.5M541.3,320.3H1096.5M541.3,334.7H1096.5M541.3,349.1H1096.5M541.3,363.5H1096.5M541.3,377.9H1096.5" stroke="#fff" stroke-opacity=".26" stroke-width="1" stroke-dasharray="1 1.6" fill="none"/><path d="M571.5,24V387M617.8,24V387M664.1,24V387M710.4,24V387M756.7,24V387M803.0,24V387M849.3,24V387M895.6,24V387M941.9,24V387M988.2,24V387M1034.5,24V387M1080.8,24V387" stroke="#fff" stroke-opacity=".42" stroke-width="1" stroke-dasharray="1 1.6" fill="none"/><path d="M533.5,25.4H538M535.5,29.0H538M535.5,32.6H538M535.5,36.2H538M533.5,39.8H538M535.5,43.4H538M535.5,47.0H538M535.5,50.6H538M533.5,54.2H538M535.5,57.8H538M535.5,61.4H538M535.5,65.0H538M533.5,68.6H538M535.5,72.2H538M535.5,75.8H538M535.5,79.4H538M533.5,83.0H538M535.5,86.6H538M535.5,90.2H538M535.5,93.8H538M533.5,97.4H538M535.5,101.0H538M535.5,104.6H538M535.5,108.2H538M533.5,111.8H538M535.5,115.4H538M535.5,119.0H538M535.5,122.6H538M533.5,126.2H538M535.5,129.8H538M535.5,133.4H538M535.5,137.0H538M533.5,140.6H538M535.5,144.2H538M535.5,147.8H538M535.5,151.4H538M533.5,155.0H538M535.5,158.6H538M535.5,162.2H538M535.5,165.8H538M533.5,169.4H538M535.5,173.0H538M535.5,176.6H538M535.5,180.2H538M533.5,183.8H538M535.5,187.4H538M535.5,191.0H538M535.5,194.6H538M533.5,198.2H538M535.5,201.8H538M535.5,205.4H538M535.5,209.0H538M533.5,212.6H538M535.5,216.2H538M535.5,219.8H538M535.5,223.4H538M533.5,227.0H538M535.5,230.6H538M535.5,234.2H538M535.5,237.8H538M533.5,241.4H538M535.5,245.0H538M535.5,248.6H538M535.5,252.2H538M533.5,255.8H538M535.5,259.4H538M535.5,263.0H538M535.5,266.6H538M533.5,270.2H538M535.5,273.8H538M535.5,277.4H538M535.5,281.0H538M533.5,284.6H538M535.5,288.2H538M535.5,291.8H538M535.5,295.4H538M533.5,299.0H538M535.5,302.6H538M535.5,306.2H538M535.5,309.8H538M533.5,313.4H538M535.5,317.0H538M535.5,320.6H538M535.5,324.2H538M533.5,327.8H538M535.5,331.4H538M535.5,335.0H538M535.5,338.6H538M533.5,342.2H538M535.5,345.8H538M535.5,349.4H538M535.5,353.0H538M533.5,356.6H538M535.5,360.2H538M535.5,363.8H538M535.5,367.4H538M533.5,371.0H538M535.5,374.6H538M535.5,378.2H538M535.5,381.8H538M533.5,385.4H538" stroke="#d8d8d8" stroke-width="1"/><text x="529.2" y="29.1" font-size="9.2" fill="#fff" text-anchor="end">50</text><text x="529.2" y="43.5" font-size="9.2" fill="#fff" text-anchor="end">48</text><text x="529.2" y="57.9" font-size="9.2" fill="#fff" text-anchor="end">46</text><text x="529.2" y="72.3" font-size="9.2" fill="#fff" text-anchor="end">44</text><text x="529.2" y="86.7" font-size="9.2" fill="#fff" text-anchor="end">42</text><text x="529.2" y="101.1" font-size="9.2" fill="#fff" text-anchor="end">40</text><text x="529.2" y="115.5" font-size="9.2" fill="#fff" text-anchor="end">38</text><text x="529.2" y="129.9" font-size="9.2" fill="#fff" text-anchor="end">36</text><text x="529.2" y="144.3" font-size="9.2" fill="#fff" text-anchor="end">34</text><text x="529.2" y="158.7" font-size="9.2" fill="#fff" text-anchor="end">32</text><text x="529.2" y="173.1" font-size="9.2" fill="#fff" text-anchor="end">30</text><text x="529.2" y="187.5" font-size="9.2" fill="#fff" text-anchor="end">28</text><text x="529.2" y="201.9" font-size="9.2" fill="#fff" text-anchor="end">26</text><text x="529.2" y="216.3" font-size="9.2" fill="#fff" text-anchor="end">24</text><text x="529.2" y="230.7" font-size="9.2" fill="#fff" text-anchor="end">22</text><text x="529.2" y="245.1" font-size="9.2" fill="#fff" text-anchor="end">20</text><text x="529.2" y="259.5" font-size="9.2" fill="#fff" text-anchor="end">18</text><text x="529.2" y="273.9" font-size="9.2" fill="#fff" text-anchor="end">16</text><text x="529.2" y="288.3" font-size="9.2" fill="#fff" text-anchor="end">14</text><text x="529.2" y="302.7" font-size="9.2" fill="#fff" text-anchor="end">12</text><text x="529.2" y="317.1" font-size="9.2" fill="#fff" text-anchor="end">10</text><text x="529.2" y="331.5" font-size="9.2" fill="#fff" text-anchor="end">8</text><text x="529.2" y="345.9" font-size="9.2" fill="#fff" text-anchor="end">6</text><text x="529.2" y="360.3" font-size="9.2" fill="#fff" text-anchor="end">4</text><text x="529.2" y="374.7" font-size="9.2" fill="#fff" text-anchor="end">2</text><path d="M1099,24V390" stroke="#ff30ff" stroke-width="2.2" stroke-dasharray="2.4 1.6"/><path d="M1100,32.3h3M1100,46.7h3M1100,61.1h3M1100,75.5h3M1100,89.9h3M1100,104.3h3M1100,118.7h3M1100,133.1h3M1100,147.5h3M1100,161.9h3M1100,176.3h3M1100,190.7h3M1100,205.1h3M1100,219.5h3M1100,233.9h3M1100,248.3h3M1100,262.7h3M1100,277.1h3M1100,291.5h3M1100,305.9h3M1100,320.3h3M1100,334.7h3M1100,349.1h3M1100,363.5h3M1100,377.9h3" stroke="#ff00ff" stroke-width="1.2"/><text x="1105" y="35.6" font-size="9.2" fill="#ff00ff">1024</text><text x="1105" y="50.0" font-size="9.2" fill="#ff00ff">1022</text><text x="1105" y="64.4" font-size="9.2" fill="#ff00ff">1020</text><text x="1105" y="78.8" font-size="9.2" fill="#ff00ff">1018</text><text x="1105" y="93.2" font-size="9.2" fill="#ff00ff">1016</text><text x="1105" y="107.6" font-size="9.2" fill="#ff00ff">1014</text><text x="1105" y="122.0" font-size="9.2" fill="#ff00ff">1012</text><text x="1105" y="136.4" font-size="9.2" fill="#ff00ff">1010</text><text x="1105" y="150.8" font-size="9.2" fill="#ff00ff">1008</text><text x="1105" y="165.2" font-size="9.2" fill="#ff00ff">1006</text><text x="1105" y="179.6" font-size="9.2" fill="#ff00ff">1004</text><text x="1105" y="194.0" font-size="9.2" fill="#ff00ff">1002</text><text x="1105" y="208.4" font-size="9.2" fill="#ff00ff">1000</text><text x="1105" y="222.8" font-size="9.2" fill="#ff00ff">998</text><text x="1105" y="237.2" font-size="9.2" fill="#ff00ff">996</text><text x="1105" y="251.6" font-size="9.2" fill="#ff00ff">994</text><text x="1105" y="266.0" font-size="9.2" fill="#ff00ff">992</text><text x="1105" y="280.4" font-size="9.2" fill="#ff00ff">990</text><text x="1105" y="294.8" font-size="9.2" fill="#ff00ff">988</text><text x="1105" y="309.2" font-size="9.2" fill="#ff00ff">986</text><text x="1105" y="323.6" font-size="9.2" fill="#ff00ff">984</text><text x="1105" y="338.0" font-size="9.2" fill="#ff00ff">982</text><text x="1105" y="352.4" font-size="9.2" fill="#ff00ff">980</text><text x="1105" y="366.8" font-size="9.2" fill="#ff00ff">978</text><text x="1105" y="381.2" font-size="9.2" fill="#ff00ff">976</text><text x="571.5" y="401.8" font-size="7.6" font-weight="bold" fill="#ffff00" text-anchor="middle">17</text><text x="617.8" y="401.8" font-size="7.6" font-weight="bold" fill="#ffff00" text-anchor="middle">18</text><text x="664.1" y="401.8" font-size="7.6" font-weight="bold" fill="#ffff00" text-anchor="middle">19</text><text x="710.4" y="401.8" font-size="7.6" font-weight="bold" fill="#ffff00" text-anchor="middle">20</text><text x="756.7" y="401.8" font-size="7.6" font-weight="bold" fill="#ffff00" text-anchor="middle">21</text><text x="803.0" y="401.8" font-size="7.6" font-weight="bold" fill="#ffff00" text-anchor="middle">22</text><text x="849.3" y="401.8" font-size="7.6" font-weight="bold" fill="#ffff00" text-anchor="middle">23</text><text x="895.6" y="401.8" font-size="7.6" font-weight="bold" fill="#ffff00" text-anchor="middle">00</text><text x="941.9" y="401.8" font-size="7.6" font-weight="bold" fill="#ffff00" text-anchor="middle">01</text><text x="988.2" y="401.8" font-size="7.6" font-weight="bold" fill="#ffff00" text-anchor="middle">02</text><text x="1034.5" y="401.8" font-size="7.6" font-weight="bold" fill="#ffff00" text-anchor="middle">03</text><text x="1080.8" y="401.8" font-size="7.6" font-weight="bold" fill="#ffff00" text-anchor="middle">04</text><path d="M548.4,389v1.5M559.9,389v1.5M571.5,389v3M583.1,389v1.5M594.6,389v1.5M606.2,389v1.5M617.8,389v3M629.4,389v1.5M641.0,389v1.5M652.5,389v1.5M664.1,389v3M675.7,389v1.5M687.2,389v1.5M698.8,389v1.5M710.4,389v3M722.0,389v1.5M733.5,389v1.5M745.1,389v1.5M756.7,389v3M768.3,389v1.5M779.9,389v1.5M791.4,389v1.5M803.0,389v3M814.6,389v1.5M826.1,389v1.5M837.7,389v1.5M849.3,389v3M860.9,389v1.5M872.5,389v1.5M884.0,389v1.5M895.6,389v3M907.2,389v1.5M918.8,389v1.5M930.3,389v1.5M941.9,389v3M953.5,389v1.5M965.0,389v1.5M976.6,389v1.5M988.2,389v3M999.8,389v1.5M1011.3,389v1.5M1022.9,389v1.5M1034.5,389v3M1046.1,389v1.5M1057.7,389v1.5M1069.2,389v1.5M1080.8,389v3M1092.4,389v1.5" stroke="#ddd" stroke-width="1"/><g clip-path="url(#c1)" fill="none" stroke-linejoin="round"><polyline points="541.5,118.8 542.5,118.8 543.5,118.8 544.5,118.8 545.5,118.8 546.5,118.8 547.5,118.8 548.6,118.8 549.6,118.8 550.6,118.8 551.6,118.8 552.6,118.8 553.6,118.8 554.6,118.8 555.6,118.8 556.6,118.8 557.6,118.8 558.6,118.8 559.6,118.8 560.6,118.8 561.7,118.8 562.7,118.8 563.7,118.8 564.7,118.8 565.7,118.8 566.7,118.8 567.7,118.8 568.7,118.8 569.7,118.8 570.7,118.8 571.7,118.8 572.7,118.8 573.7,118.8 574.8,118.8 575.8,118.8 576.8,118.8 577.8,118.8 578.8,118.8 579.8,118.8 580.8,118.8 581.8,118.8 582.8,118.8 583.8,118.8 584.8,118.8 585.8,118.8 586.8,118.8 587.8,118.8 588.9,118.8 589.9,118.8 590.9,118.8 591.9,118.8 592.9,118.8 593.9,118.8 594.9,118.8 595.9,118.8 596.9,118.8 597.9,118.8 598.9,118.8 599.9,118.8 600.9,118.8 602.0,118.8 603.0,118.8 604.0,118.8 605.0,118.8 606.0,118.8 607.0,118.8 608.0,118.8 609.0,118.1 610.0,118.1 611.0,118.1 612.0,117.4 613.0,117.4 614.0,117.4 615.0,116.6 616.0,116.6 617.0,116.6 618.0,116.6 619.0,116.6 620.0,115.9 621.0,115.9 622.1,115.9 623.1,115.9 624.1,115.9 625.1,115.9 626.1,115.9 627.1,115.9 628.1,115.9 629.1,115.2 630.1,115.2 631.2,115.2 632.2,115.2 633.2,115.2 634.2,115.2 635.2,115.2 636.2,115.2 637.2,115.2 638.2,114.5 639.2,114.5 640.3,114.5 641.3,114.5 642.3,114.5 643.3,114.5 644.3,114.5 645.3,114.5 646.3,114.5 647.3,113.8 648.4,113.8 649.4,113.8 650.4,113.8 651.4,113.8 652.4,113.8 653.4,113.8 654.4,113.8 655.4,113.8 656.4,113.0 657.5,113.0 658.5,113.0 659.5,113.0 660.5,113.0 661.5,113.0 662.6,112.3 663.6,112.3 664.7,111.6 665.8,111.6 666.8,110.9 667.9,110.2 668.9,110.2 670.0,109.4 671.0,109.4 672.0,109.4 673.0,109.4 674.0,109.4 675.0,109.4 676.0,108.7 677.0,108.7 678.0,108.7 679.0,108.7 680.0,108.7 681.0,108.7 682.0,108.7 683.0,108.7 684.0,108.0 685.0,108.0 686.0,108.0 687.0,108.0 688.0,108.0 689.0,108.0 690.0,108.0 691.0,107.3 692.0,107.3 693.0,107.3 694.1,107.3 695.1,106.6 696.1,106.6 697.1,106.6 698.2,106.6 699.2,105.8 700.2,105.8 701.2,105.8 702.3,105.8 703.3,105.1 704.3,105.1 705.4,105.1 706.4,105.1 707.4,104.4 708.4,104.4 709.5,104.4 710.5,104.4 711.5,103.7 712.5,103.7 713.5,103.7 714.5,103.7 715.6,103.7 716.6,103.7 717.6,103.7 718.6,103.7 719.6,103.0 720.6,103.0 721.7,103.0 722.7,103.0 723.7,103.0 724.7,103.0 725.7,103.0 726.7,103.0 727.8,102.2 728.8,102.2 729.8,102.2 730.8,102.2 731.8,102.2 732.8,102.2 733.8,102.2 734.9,102.2 735.9,102.2 736.9,101.5 737.9,101.5 738.9,101.5 739.9,101.5 741.0,101.5 742.0,101.5 743.0,101.5 744.0,101.5 745.0,100.8 746.0,100.8 747.0,100.8 748.0,100.8 749.0,100.8 750.0,100.8 751.0,100.8 752.0,100.8 753.0,100.8 754.0,100.8 755.0,100.8 756.0,100.8 757.0,100.8 758.0,100.8 759.0,100.8 760.0,100.8 761.0,100.8 762.0,100.8 763.0,100.1 764.0,100.1 765.0,100.1 766.0,100.1 767.0,100.1 768.0,100.1 769.0,100.1 770.0,100.1 771.0,100.1 772.0,100.1 773.0,100.1 774.0,100.1 775.0,100.1 776.0,99.4 777.0,99.4 778.0,99.4 779.0,99.4 780.0,99.4 781.0,98.6 782.0,98.6 783.0,98.6 784.0,98.6 785.0,98.6 786.0,97.9 787.0,97.9 788.0,97.9 789.0,97.9 790.0,97.9 791.0,97.9 792.0,97.2 793.0,97.2 794.0,97.2 795.0,97.2 796.0,97.2 797.0,97.2 798.0,97.2 799.0,97.2 800.0,97.2 801.0,97.2 802.0,97.2 803.0,97.2 804.0,96.5 805.0,96.5 806.0,96.5 807.0,96.5 808.0,96.5 809.0,96.5 810.0,96.5 811.0,96.5 812.0,96.5 813.0,96.5 814.0,96.5 815.0,96.5 816.0,96.5 817.0,95.8 818.0,95.8 819.0,95.8 820.0,95.8 821.0,95.8 822.0,95.8 823.0,95.8 824.0,95.8 825.0,95.8 826.0,95.8 827.0,95.8 828.0,95.8 829.0,95.8 830.0,95.8 831.0,95.8 832.0,95.8 833.0,95.8 834.0,95.8 835.0,95.8 836.0,95.8 837.0,95.8 838.0,95.8 839.0,95.8 840.0,95.8 841.0,95.8 842.0,95.8 843.0,95.8 844.0,95.8 845.0,95.8 846.0,96.5 847.0,96.5 848.0,96.5 849.0,96.5 850.0,97.2 851.0,97.2 852.0,97.2 853.0,97.2 854.0,97.2 855.0,97.2 856.0,97.2 857.0,97.2 858.0,97.2 859.0,97.2 860.0,97.2 861.0,97.2 862.0,97.2 863.0,97.2 864.0,97.2 865.0,97.2 866.0,97.2 867.0,97.2 868.0,97.2 869.0,97.2 870.0,97.2 871.0,97.2 872.0,97.2 873.0,97.2 874.0,97.2 875.0,97.2 876.0,97.2 877.0,97.2 878.0,97.2 879.0,97.2 880.0,97.2 881.0,97.2 882.0,97.2 883.0,97.2 884.0,97.2 885.0,97.2 886.0,96.5 887.0,96.5 888.0,96.5 889.0,95.8 890.0,95.8 891.0,95.0 892.0,95.0 893.0,95.0 894.1,95.0 895.1,95.8 896.1,95.8 897.1,95.8 898.1,95.8 899.1,95.8 900.2,95.8 901.2,95.8 902.2,95.8 903.2,95.8 904.2,95.8 905.2,95.8 906.3,95.8 907.3,95.8 908.3,95.8 909.3,95.8 910.3,95.8 911.3,95.8 912.4,95.8 913.4,95.8 914.4,95.8 915.5,95.8 916.5,96.5 917.6,96.5 918.7,96.5 919.8,97.2 920.9,97.2 921.9,97.2 923.0,97.9 924.0,97.9 925.0,97.9 926.0,97.9 927.0,97.9 928.0,97.9 929.0,97.9 930.0,97.9 931.0,97.9 932.0,97.9 933.0,97.9 934.0,97.9 935.0,97.9 936.0,97.9 937.0,97.9 938.0,97.9 939.0,97.9 940.0,97.9 941.0,97.9 942.0,97.9 943.0,97.9 944.0,97.9 945.0,97.9 946.0,97.9 947.0,97.9 948.0,97.9 949.0,97.9 950.0,97.9 951.0,97.9 952.0,97.9 953.0,97.9 954.0,97.9 955.0,97.9 956.0,97.9 957.0,97.9 958.0,97.9 959.0,97.9 960.0,97.9 961.0,97.9 962.0,97.9 963.0,97.9 964.0,97.9 965.0,97.9 966.0,97.9 967.0,97.9 968.0,97.9 969.0,97.9 970.0,97.9 971.0,97.9 972.0,97.9 973.0,97.9 974.0,97.9 975.0,97.9 976.0,97.9 977.0,97.9 978.0,97.9 979.0,97.9 980.0,97.9 981.0,97.9 982.0,97.9 983.0,98.6 984.0,98.6 985.0,98.6 986.0,98.6 987.0,98.6 988.1,98.6 989.1,98.6 990.1,98.6 991.1,98.6 992.2,98.6 993.2,98.6 994.2,98.6 995.2,98.6 996.2,98.6 997.3,98.6 998.3,98.6 999.3,98.6 1000.3,98.6 1001.3,98.6 1002.4,98.6 1003.4,98.6 1004.4,98.6 1005.4,98.6 1006.5,98.6 1007.5,98.6 1008.5,98.6 1009.7,98.6 1010.9,98.6 1012.0,97.9 1013.2,97.9 1014.4,97.9 1015.7,98.6 1017.0,100.1 1018.0,100.1 1019.0,100.1 1020.1,100.1 1021.1,100.1 1022.1,100.8 1023.1,100.8 1024.2,100.8 1025.2,100.8 1026.2,100.8 1027.2,100.8 1028.2,101.5 1029.3,101.5 1030.3,101.5 1031.3,101.5 1032.3,101.5 1033.3,101.5 1034.4,101.5 1035.4,102.2 1036.4,102.2 1037.4,102.2 1038.5,102.2 1039.5,102.2 1040.5,102.2 1041.5,103.0 1042.5,103.0 1043.6,103.0 1044.6,103.0 1045.6,103.0 1046.6,103.0 1047.7,103.0 1048.7,103.7 1049.7,103.7 1050.7,103.7 1051.7,103.7 1052.7,103.7 1053.7,103.7 1054.8,103.7 1055.8,103.7 1056.8,104.4 1057.8,104.4 1058.8,104.4 1059.8,104.4 1060.8,104.4 1061.8,104.4 1062.8,104.4 1063.8,104.4 1064.9,104.4 1065.9,105.1 1066.9,105.1 1067.9,105.1 1068.9,105.1 1069.9,105.1 1070.9,105.1 1071.9,105.1 1072.9,105.1 1073.9,105.8 1075.0,105.8 1076.0,105.8 1077.0,105.8 1078.0,105.8 1079.0,105.8 1080.0,106.6 1081.0,106.6 1082.0,106.6 1083.0,107.3 1084.0,107.3 1085.0,108.0 1086.0,108.0 1087.0,108.7 1088.0,108.7 1089.1,108.7 1090.1,108.7 1091.2,108.7 1092.2,108.7 1093.3,108.7 1094.3,108.7 1095.4,108.7 1096.4,108.7 1097.5,108.8" stroke="#e83ce8" stroke-width="1.8"/><polyline points="541.5,252.0 542.8,252.0 544.0,279.0 545.2,252.0 546.5,306.0 547.8,306.0 549.0,279.0 550.2,306.0 551.5,265.5 552.8,238.5 554.0,279.0 555.2,265.5 556.5,252.0 557.8,306.0 559.0,292.5 560.2,252.0 562.8,252.0 564.0,279.0 565.2,279.0 566.5,252.0 567.8,292.5 569.0,292.5 570.2,279.0 571.5,265.5 572.8,279.0 574.0,238.5 575.2,265.5 576.5,279.0 577.8,279.0 579.0,319.5 580.2,319.5 581.5,292.5 582.8,306.0 584.0,319.5 585.2,292.5 586.5,319.5 587.8,306.0 589.0,279.0 590.2,279.0 591.5,306.0 592.8,279.0 594.0,279.0 595.2,306.0 596.5,306.0 597.8,279.0 599.0,252.0 600.2,292.5 601.5,306.0 602.8,279.0 604.0,279.0 605.2,292.5 606.5,279.0 607.8,292.5 609.0,292.5 610.2,279.0 611.5,238.5 612.8,279.0 614.0,279.0 615.2,306.0 616.5,333.0 617.8,333.0 619.0,319.5 620.2,306.0 621.5,306.0 622.8,252.0 624.0,279.0 625.2,306.0 626.5,292.5 627.8,306.0 629.0,306.0 630.2,279.0 631.5,279.0 632.8,292.5 634.0,292.5 635.2,265.5 636.5,279.0 637.8,292.5 639.0,292.5 640.2,265.5 641.5,292.5 642.8,265.5 644.0,279.0 645.2,279.0 646.5,265.5 647.8,279.0 649.0,306.0 650.2,333.0 651.5,333.0 652.8,319.5 654.0,319.5 655.2,306.0 656.5,306.0 657.8,319.5 659.0,333.0 660.2,319.5 661.5,319.5 662.8,306.0 664.0,319.5 665.2,333.0 666.5,319.5 667.8,319.5 669.0,306.0 670.2,333.0 671.5,319.5 672.8,319.5 674.0,306.0 675.2,292.5 676.5,292.5 677.8,279.0 679.0,279.0 680.2,292.5 681.5,265.5 682.8,265.5 684.0,279.0 685.2,292.5 686.5,265.5 687.8,238.5 689.0,279.0 690.2,292.5 691.5,265.5 692.8,265.5 694.0,292.5 695.2,279.0 696.5,292.5 697.8,292.5 699.0,306.0 700.2,292.5 701.5,319.5 702.8,333.0 704.0,319.5 705.2,333.0 706.5,319.5 707.8,319.5 709.0,333.0 710.2,333.0 711.5,319.5 715.2,319.5 716.5,333.0 717.8,319.5 719.0,319.5 720.2,333.0 721.5,319.5 724.0,319.5 725.2,333.0 726.5,346.5 729.0,346.5 730.2,319.5 731.5,333.0 740.2,333.0 741.5,346.5 742.8,360.0 747.8,360.0 749.0,346.5 750.2,360.0 751.5,346.5 752.8,360.0 754.0,360.0 755.2,333.0 756.5,333.0 757.8,346.5 759.0,346.5 760.2,333.0 765.2,333.0 766.5,360.0 770.2,360.0 771.5,346.5 774.0,346.5 775.2,360.0 780.2,360.0 781.5,333.0 791.5,333.0 792.8,360.0 795.2,360.0 796.5,346.5 797.8,346.5 799.0,360.0 800.2,360.0 801.5,346.5 802.8,384.3 804.0,384.3 805.2,346.5 806.5,333.0 810.2,333.0 811.5,346.5 812.8,360.0 830.2,360.0 831.5,346.5 835.2,346.5 836.5,360.0 839.0,360.0 840.2,333.0 846.5,333.0 847.8,360.0 852.8,360.0 854.0,366.8 857.8,366.8 859.0,384.3 860.2,366.8 861.5,360.0 866.5,360.0 867.8,333.0 872.8,333.0 874.0,346.5 875.2,306.0 876.5,306.0 877.8,319.5 879.0,319.5 880.2,306.0 881.5,306.0 882.8,319.5 884.0,306.0 885.2,319.5 886.5,306.0 887.8,319.5 889.0,319.5 890.2,306.0 891.5,306.0 892.8,319.5 894.0,319.5 895.2,306.0 896.5,306.0 897.8,319.5 899.0,319.5 900.2,333.0 901.5,319.5 902.8,333.0 904.0,319.5 905.2,333.0 906.5,319.5 907.8,319.5 909.0,306.0 910.2,333.0 911.5,319.5 912.8,319.5 914.0,333.0 915.2,333.0 916.5,319.5 917.8,319.5 919.0,333.0 920.2,319.5 921.5,319.5 922.8,333.0 929.0,333.0 930.2,360.0 935.2,360.0 936.5,373.5 940.2,373.5 941.5,384.3 944.0,384.3 945.2,360.0 952.8,360.0 954.0,384.3 959.0,384.3 960.2,360.0 962.8,360.0 964.0,384.3 969.0,384.3 970.2,360.0 971.5,333.0 972.8,319.5 974.0,333.0 975.2,319.5 976.5,346.5 977.8,346.5 979.0,333.0 980.2,333.0 981.5,346.5 982.8,346.5 984.0,360.0 985.2,360.0 986.5,346.5 987.8,346.5 989.0,360.0 990.2,346.5 991.5,360.0 992.8,360.0 994.0,333.0 995.2,333.0 996.5,346.5 997.8,360.0 999.0,333.0 1000.2,346.5 1001.5,346.5 1002.8,333.0 1006.5,333.0 1007.8,346.5 1009.0,333.0 1017.8,333.0 1019.0,319.5 1021.5,319.5 1022.8,306.0 1024.0,319.5 1029.0,319.5 1030.2,360.0 1032.8,360.0 1034.0,346.5 1035.2,346.5 1036.5,333.0 1047.8,333.0 1049.0,319.5 1050.2,333.0 1051.5,319.5 1052.8,319.5 1054.0,333.0 1055.2,319.5 1056.5,333.0 1057.8,319.5 1059.0,319.5 1060.2,333.0 1072.8,333.0 1074.0,360.0 1076.5,360.0 1077.8,333.0 1079.0,319.5 1080.2,319.5 1081.5,333.0 1082.8,319.5 1084.0,319.5 1085.2,333.0 1086.5,319.5 1087.8,319.5 1089.0,333.0 1090.2,333.0 1091.5,319.5 1092.8,333.0 1094.0,333.0 1095.2,319.5 1096.5,319.5" stroke="#dedede" stroke-width="1.5"/><polyline points="541.5,346.5 542.8,360.0 544.0,360.0 545.2,333.0 546.5,333.0 547.8,346.5 549.0,333.0 550.2,346.5 551.5,346.5 552.8,360.0 554.0,333.0 555.2,333.0 556.5,360.0 557.8,360.0 559.0,319.5 560.2,333.0 561.5,319.5 562.8,333.0 564.0,333.0 565.2,319.5 566.5,319.5 567.8,346.5 569.0,346.5 570.2,333.0 571.5,333.0 572.8,319.5 574.0,346.5 575.2,360.0 576.5,360.0 577.8,346.5 579.0,346.5 580.2,360.0 581.5,360.0 582.8,346.5 584.0,346.5 585.2,333.0 586.5,346.5 587.8,360.0 589.0,333.0 590.2,346.5 591.5,360.0 592.8,360.0 594.0,333.0 595.2,360.0 596.5,346.5 597.8,360.0 599.0,346.5 600.2,360.0 601.5,360.0 602.8,346.5 604.0,360.0 605.2,346.5 606.5,346.5 607.8,360.0 609.0,346.5 610.2,346.5 611.5,360.0 612.8,360.0 614.0,346.5 615.2,360.0 616.5,346.5 617.8,346.5 619.0,360.0 620.2,346.5 621.5,346.5 622.8,360.0 624.0,346.5 625.2,346.5 626.5,360.0 627.8,360.0 629.0,333.0 630.2,360.0 631.5,333.0 632.8,346.5 634.0,346.5 635.2,333.0 636.5,346.5 637.8,360.0 639.0,360.0 640.2,333.0 641.5,333.0 642.8,360.0 644.0,360.0 645.2,346.5 646.5,346.5 647.8,333.0 649.0,346.5 650.2,346.5 651.5,333.0 652.8,333.0 654.0,360.0 655.2,360.0 656.5,333.0 657.8,333.0 659.0,360.0 660.2,346.5 661.5,346.5 662.8,333.0 664.0,346.5 665.2,360.0 666.5,360.0 667.8,333.0 669.0,333.0 670.2,346.5 671.5,346.5 672.8,333.0 674.0,333.0 675.2,360.0 676.5,360.0 677.8,333.0 679.0,333.0 680.2,346.5 681.5,346.5 682.8,360.0 684.0,360.0 685.2,333.0 686.5,333.0 687.8,346.5 689.0,346.5 690.2,333.0 691.5,360.0 692.8,333.0 694.0,346.5 695.2,346.5 696.5,360.0 697.8,360.0 699.0,333.0 700.2,333.0 701.5,360.0 702.8,333.0 704.0,360.0 724.0,360.0 725.2,385.6 727.8,385.6 729.0,360.0 740.2,360.0 741.5,366.8 746.5,366.8 747.8,360.0 751.5,360.0 752.8,385.6 754.0,385.6 755.2,360.0 770.2,360.0 771.5,373.5 772.8,373.5 774.0,360.0 776.5,360.0 777.8,373.5 779.0,373.5 780.2,360.0 791.5,360.0 792.8,373.5 794.0,373.5 795.2,360.0 796.5,373.5 797.8,373.5 799.0,385.6 805.2,385.6 806.5,360.0 825.2,360.0 826.5,385.6 827.8,360.0 829.0,360.0 830.2,385.6 831.5,360.0 851.5,360.0 852.8,385.6 856.5,385.6 857.8,360.0 859.0,360.0 860.2,373.5 861.5,385.6 862.8,373.5 864.0,385.6 865.2,385.6 866.5,373.5 867.8,385.6 870.2,385.6 871.5,360.0 874.0,360.0 875.2,346.5 876.5,360.0 877.8,360.0 879.0,346.5 887.8,346.5 889.0,333.0 890.2,346.5 891.5,346.5 892.8,333.0 894.0,333.0 895.2,346.5 896.5,346.5 897.8,333.0 899.0,333.0 900.2,346.5 905.2,346.5 906.5,360.0 907.8,360.0 909.0,346.5 910.2,360.0 911.5,360.0 912.8,346.5 915.2,346.5 916.5,360.0 934.0,360.0 935.2,385.6 945.2,385.6 946.5,373.5 952.8,373.5 954.0,385.6 971.5,385.6 972.8,373.5 979.0,373.5 980.2,366.8 981.5,360.0 1020.2,360.0 1021.5,346.5 1029.0,346.5 1030.2,373.5 1032.8,373.5 1034.0,360.0 1051.5,360.0 1052.8,346.5 1054.0,346.5 1055.2,360.0 1056.5,360.0 1057.8,346.5 1059.0,346.5 1060.2,360.0 1061.5,346.5 1062.8,360.0 1064.0,360.0 1065.2,346.5 1066.5,346.5 1067.8,360.0 1092.8,360.0 1094.0,346.5 1096.5,346.5" stroke="#b2eab2" stroke-width="1.5"/><polyline points="541.5,322.9 547.0,332.9 553.0,326.5 560.0,320.7 565.0,317.8 571.0,309.9 576.0,316.4 580.0,322.1 586.0,311.3 591.0,323.6 596.0,333.7 601.0,333.7 610.0,320.7 615.0,326.5 620.0,333.7 626.0,332.2 633.0,323.6 637.0,327.9 640.0,331.5 644.0,327.9 650.0,320.7 660.0,320.7 668.0,333.7 680.0,333.7 690.0,320.7 702.0,320.7 718.0,346.6 725.0,348.1 732.0,359.6 740.0,359.6 748.0,350.2 756.0,359.6 776.0,359.6 785.7,373.3 792.5,361.0 802.0,361.0 810.0,372.5 819.0,360.3 856.0,360.3 865.5,385.5 888.5,344.5 892.0,333.7 918.0,333.7 925.5,345.9 934.0,346.6 946.0,373.3 962.8,373.3 972.0,385.5 985.0,360.3 1018.9,360.3 1033.8,335.1 1049.7,360.3 1056.0,346.6 1079.5,346.6 1088.0,359.6 1095.4,347.3 1097.5,345.2" stroke="#10dc10" stroke-width="1.5"/></g><rect x="529" y="403.4" width="570" height="120.2" fill="#a6a6a6"/><path d="M529,404.7H1099M530.6,403.4V523.6" stroke="#e4e4e4" stroke-width="2.8" fill="none"/><rect x="532.3" y="406" width="564.4" height="115" fill="url(#cg2)"/><path d="M532.3,436H1096.7M532.3,464.3H1096.7M532.3,492.5H1096.7" stroke="#fff" stroke-opacity=".55" stroke-width="1" stroke-dasharray="1 1.4"/><path d="M524.8,406.6H529M526.6,413.7H529M526.6,420.9H529M526.6,428.0H529M524.8,435.1H529M526.6,442.2H529M526.6,449.4H529M526.6,456.5H529M524.8,463.6H529M526.6,470.7H529M526.6,477.9H529M526.6,485.0H529M524.8,492.1H529M526.6,499.2H529M526.6,506.4H529M526.6,513.5H529M524.8,520.6H529" stroke="#d8d800" stroke-width="1.3"/><g clip-path="url(#c2)" fill="none" stroke-linejoin="round"><polyline points="532.5,442.3 533.7,444.2 534.8,443.7 536.0,436.0 537.2,446.0 538.3,445.5 539.5,440.9 540.6,441.8 541.8,436.1 543.0,439.0 544.1,444.3 545.3,444.7 546.5,442.8 547.6,436.2 548.8,438.5 550.0,446.9 551.1,439.4 552.3,442.2 553.4,438.6 554.6,443.9 555.8,446.1 556.9,440.4 558.1,453.9 559.3,439.8 560.4,436.7 561.6,440.3 562.8,445.6 563.9,440.2 565.1,450.0 566.2,457.6 567.4,445.0 568.6,437.1 569.7,440.9 570.9,458.2 572.1,439.0 573.2,439.2 574.4,447.2 575.6,440.9 576.7,442.9 577.9,438.4 579.1,445.9 580.2,437.8 581.4,438.4 582.5,444.1 583.7,441.2 584.9,443.4 586.0,441.0 587.2,438.5 588.4,445.1 589.5,454.6 590.7,448.4 591.9,442.2 593.0,444.3 594.2,442.8 595.3,438.5 596.5,438.3 597.7,447.1 598.8,446.0 600.0,444.9 600.0,440.4 601.2,440.8 602.3,442.0 603.5,447.7 604.7,447.6 605.8,443.8 607.0,443.8 608.1,443.2 609.3,443.1 610.5,447.8 611.6,444.2 612.8,441.0 614.0,446.6 615.1,443.3 616.3,446.7 617.4,445.9 618.6,443.5 619.8,442.9 620.9,446.9 622.1,443.2 623.3,446.1 624.4,441.1 625.6,443.0 626.7,444.8 627.9,446.4 629.1,444.0 630.2,447.2 631.4,444.2 632.6,448.4 633.7,449.3 634.9,445.7 636.0,443.0 637.2,449.2 638.4,447.3 639.5,447.7 640.7,448.2 641.9,447.3 643.0,447.1 644.2,447.2 645.3,442.4 646.5,445.8 647.7,444.1 648.8,451.2 650.0,446.3 651.2,443.0 652.3,445.2 653.5,455.1 654.7,446.5 655.8,447.7 657.0,444.8 658.1,443.0 659.3,445.3 660.5,444.0 661.6,451.8 662.8,448.2 664.0,447.7 665.1,448.1 666.3,450.0 667.4,450.1 668.6,446.6 669.8,448.5 670.9,451.4 672.1,448.7 673.3,458.1 674.4,444.8 675.6,449.0 676.7,449.1 677.9,447.2 679.1,446.1 680.2,452.1 681.4,452.1 682.6,449.2 683.7,452.4 684.9,447.9 686.0,452.5 687.2,447.0 688.4,445.8 689.5,448.4 690.7,451.2 691.9,445.1 693.0,447.3 694.2,451.4 695.3,447.4 696.5,453.2 697.7,450.2 698.8,450.6 700.0,451.4 700.0,453.0 701.2,451.2 702.3,452.1 703.5,451.3 704.7,451.2 705.9,452.1 707.0,451.9 708.2,451.4 709.4,453.0 710.5,452.4 711.7,450.1 712.9,451.0 714.0,451.8 715.2,453.7 716.4,453.6 717.6,452.2 718.7,450.1 719.9,453.1 721.1,451.7 722.2,452.3 723.4,452.8 724.6,452.5 725.7,451.9 726.9,453.6 728.1,451.5 729.3,451.6 730.4,453.4 731.6,450.8 732.8,451.2 733.9,453.3 735.1,450.3 736.3,453.3 737.4,452.8 738.6,451.7 739.8,451.1 741.0,453.1 742.1,453.6 743.3,450.6 744.5,451.9 745.6,452.2 746.8,452.0 748.0,451.3 749.1,450.6 750.3,452.3 751.5,453.2 752.7,450.3 753.8,450.9 755.0,453.3 757.0,443.5 778.0,443.5 779.0,449.9 780.2,449.5 781.3,447.7 782.5,449.8 783.7,450.7 784.8,450.8 786.0,449.9 787.2,448.0 788.3,450.5 789.5,448.7 790.7,450.0 791.8,451.0 793.0,450.3 794.2,448.6 795.3,449.2 796.5,451.1 797.7,448.8 798.8,450.3 800.0,449.7 802.0,462.0 835.0,462.0 836.0,440.0 838.0,428.6 841.4,413.8 861.0,414.6 872.3,414.6 873.0,519.2 873.5,517.0 874.7,516.0 875.8,517.7 877.0,515.4 878.1,519.2 879.3,515.3 880.4,516.0 881.6,516.8 882.7,520.5 883.9,517.4 885.1,516.7 886.2,518.0 887.4,516.0 888.5,515.3 889.7,516.2 890.8,512.1 892.0,513.3 893.1,511.8 894.3,514.3 895.4,514.1 896.6,510.5 897.8,510.9 898.9,512.1 900.1,518.5 901.2,517.1 902.4,509.1 903.5,512.0 904.7,508.3 905.8,511.3 907.0,507.8 910.0,500.0 930.5,500.0 933.0,496.4 972.0,496.4 973.0,502.9 1013.7,502.9 1014.5,516.0 1016.0,407.8 1017.5,407.8 1018.7,516.0 1019.5,515.0 1021.0,507.4 1022.0,507.1 1023.2,506.8 1024.3,507.0 1025.5,507.7 1026.7,507.0 1027.8,507.1 1029.0,506.5 1030.2,508.2 1031.3,507.8 1032.5,508.1 1033.7,507.2 1034.8,508.2 1036.0,507.4 1037.2,507.6 1038.3,507.6 1039.5,508.0 1040.4,419.7 1044.8,414.4 1045.7,510.3 1046.0,508.3 1047.2,506.0 1048.3,506.0 1049.5,508.8 1050.6,505.7 1051.8,511.4 1053.0,508.4 1054.1,506.3 1055.3,506.6 1056.4,508.1 1057.6,506.5 1058.8,507.3 1059.9,507.4 1061.1,511.0 1062.2,511.4 1063.4,511.5 1064.5,509.7 1065.7,511.5 1066.9,509.7 1068.0,509.7 1069.2,506.4 1070.3,505.5 1071.5,505.8 1072.7,511.5 1073.8,507.3 1075.0,507.0 1076.1,509.8 1077.3,506.7 1078.5,511.2 1079.6,507.9 1080.8,518.5 1081.9,510.1 1083.1,505.4 1084.2,511.4 1085.4,507.3 1086.6,505.5 1087.7,508.1 1088.9,505.3 1090.0,505.3 1091.2,505.3 1092.4,507.5 1093.5,517.5 1094.7,511.1 1095.8,508.1 1097.0,508.2" stroke="#ecec20" stroke-width="1.5"/></g><rect x="543" y="555.1" width="556.2" height="336.6" fill="#e6e6e6"/><rect x="546.4" y="556.8" width="550" height="331.4" fill="url(#cg)"/><path d="M546.4,593.5H1096.4M546.4,626.2H1096.4M546.4,658.9H1096.4M546.4,691.6H1096.4M546.4,724.3H1096.4M546.4,757.0H1096.4M546.4,789.7H1096.4M546.4,822.4H1096.4M546.4,855.1H1096.4M546.4,887.8H1096.4" stroke="#fff" stroke-opacity=".34" stroke-width="1" stroke-dasharray="1 1.6" fill="none"/><path d="M577.2,557V888.2M622.9,557V888.2M668.7,557V888.2M714.4,557V888.2M760.2,557V888.2M805.9,557V888.2M851.6,557V888.2M897.4,557V888.2M943.1,557V888.2M988.9,557V888.2M1034.6,557V888.2M1080.3,557V888.2" stroke="#fff" stroke-opacity=".36" stroke-width="1" stroke-dasharray="1 1.6" fill="none"/><path d="M514,557V889.5" stroke="#8888ff" stroke-width="2"/><path d="M508.5,558.7H513.5M510.4,567.0H513.5M510.4,575.2H513.5M510.4,583.5H513.5M508.5,591.7H513.5M510.4,600.0H513.5M510.4,608.2H513.5M510.4,616.5H513.5M508.5,624.7H513.5M510.4,633.0H513.5M510.4,641.2H513.5M510.4,649.5H513.5M508.5,657.7H513.5M510.4,666.0H513.5M510.4,674.2H513.5M510.4,682.5H513.5M508.5,690.7H513.5M510.4,699.0H513.5M510.4,707.2H513.5M510.4,715.5H513.5M508.5,723.7H513.5M510.4,732.0H513.5M510.4,740.2H513.5M510.4,748.5H513.5M508.5,756.7H513.5M510.4,765.0H513.5M510.4,773.2H513.5M510.4,781.5H513.5M508.5,789.7H513.5M510.4,798.0H513.5M510.4,806.2H513.5M510.4,814.5H513.5M508.5,822.7H513.5M510.4,831.0H513.5M510.4,839.2H513.5M510.4,847.5H513.5M508.5,855.7H513.5M510.4,864.0H513.5M510.4,872.2H513.5M510.4,880.5H513.5M508.5,888.7H513.5" stroke="#8888ff" stroke-width="1.3"/><text x="505" y="562.0" font-size="9.2" fill="#7878ff" text-anchor="end">100</text><text x="505" y="595.0" font-size="9.2" fill="#7878ff" text-anchor="end">90</text><text x="505" y="628.0" font-size="9.2" fill="#7878ff" text-anchor="end">80</text><text x="505" y="661.0" font-size="9.2" fill="#7878ff" text-anchor="end">70</text><text x="505" y="694.0" font-size="9.2" fill="#7878ff" text-anchor="end">60</text><text x="505" y="727.0" font-size="9.2" fill="#7878ff" text-anchor="end">50</text><text x="505" y="760.0" font-size="9.2" fill="#7878ff" text-anchor="end">40</text><text x="505" y="793.0" font-size="9.2" fill="#7878ff" text-anchor="end">30</text><text x="505" y="826.0" font-size="9.2" fill="#7878ff" text-anchor="end">20</text><text x="505" y="859.0" font-size="9.2" fill="#7878ff" text-anchor="end">10</text><text x="505" y="892.0" font-size="9.2" fill="#7878ff" text-anchor="end">0</text><path d="M539,558.0H543M540.8,571.6H543M540.8,585.3H543M540.8,599.0H543M539,612.6H543M540.8,626.2H543M540.8,639.9H543M540.8,653.5H543M539,667.2H543M540.8,680.9H543M540.8,694.5H543M540.8,708.1H543M539,721.8H543M540.8,735.5H543M540.8,749.1H543M540.8,762.8H543M539,776.4H543M540.8,790.0H543M540.8,803.7H543M540.8,817.4H543M539,831.0H543M540.8,844.7H543M540.8,858.3H543M540.8,872.0H543M539,885.6H543" stroke="#ff0000" stroke-width="1.3"/><text x="535.2" y="561.3" font-size="9.2" fill="#ff0000" text-anchor="end">30</text><text x="535.2" y="615.9" font-size="9.2" fill="#ff0000" text-anchor="end">25</text><text x="535.2" y="670.5" font-size="9.2" fill="#ff0000" text-anchor="end">20</text><text x="535.2" y="725.1" font-size="9.2" fill="#ff0000" text-anchor="end">15</text><text x="535.2" y="779.7" font-size="9.2" fill="#ff0000" text-anchor="end">10</text><text x="535.2" y="834.3" font-size="9.2" fill="#ff0000" text-anchor="end">5</text><text x="535.2" y="888.9" font-size="9.2" fill="#ff0000" text-anchor="end">0</text><path d="M1099,557V891" stroke="#10e010" stroke-width="2.2" stroke-dasharray="2.4 1.6"/><path d="M1100,558.7h3M1100,575.1h3M1100,591.4h3M1100,607.8h3M1100,624.2h3M1100,640.6h3M1100,656.9h3M1100,673.3h3M1100,689.7h3M1100,706.0h3M1100,722.4h3M1100,738.8h3M1100,755.1h3M1100,771.5h3M1100,787.9h3M1100,804.2h3M1100,820.6h3M1100,837.0h3M1100,853.4h3M1100,869.7h3M1100,886.1h3" stroke="#00e000" stroke-width="1.2"/><text x="1105" y="562.0" font-size="9.2" fill="#00e800">40</text><text x="1105" y="578.4" font-size="9.2" fill="#00e800">38</text><text x="1105" y="594.7" font-size="9.2" fill="#00e800">36</text><text x="1105" y="611.1" font-size="9.2" fill="#00e800">34</text><text x="1105" y="627.5" font-size="9.2" fill="#00e800">32</text><text x="1105" y="643.9" font-size="9.2" fill="#00e800">30</text><text x="1105" y="660.2" font-size="9.2" fill="#00e800">28</text><text x="1105" y="676.6" font-size="9.2" fill="#00e800">26</text><text x="1105" y="693.0" font-size="9.2" fill="#00e800">24</text><text x="1105" y="709.3" font-size="9.2" fill="#00e800">22</text><text x="1105" y="725.7" font-size="9.2" fill="#00e800">20</text><text x="1105" y="742.1" font-size="9.2" fill="#00e800">18</text><text x="1105" y="758.4" font-size="9.2" fill="#00e800">16</text><text x="1105" y="774.8" font-size="9.2" fill="#00e800">14</text><text x="1105" y="791.2" font-size="9.2" fill="#00e800">12</text><text x="1105" y="807.5" font-size="9.2" fill="#00e800">10</text><text x="1105" y="823.9" font-size="9.2" fill="#00e800">8</text><text x="1105" y="840.3" font-size="9.2" fill="#00e800">6</text><text x="1105" y="856.7" font-size="9.2" fill="#00e800">4</text><text x="1105" y="873.0" font-size="9.2" fill="#00e800">2</text><text x="1105" y="889.4" font-size="9.2" fill="#00e800">0</text><text x="577.2" y="903" font-size="7.6" font-weight="bold" fill="#ffff00" text-anchor="middle">17</text><text x="622.9" y="903" font-size="7.6" font-weight="bold" fill="#ffff00" text-anchor="middle">18</text><text x="668.7" y="903" font-size="7.6" font-weight="bold" fill="#ffff00" text-anchor="middle">19</text><text x="714.4" y="903" font-size="7.6" font-weight="bold" fill="#ffff00" text-anchor="middle">20</text><text x="760.2" y="903" font-size="7.6" font-weight="bold" fill="#ffff00" text-anchor="middle">21</text><text x="805.9" y="903" font-size="7.6" font-weight="bold" fill="#ffff00" text-anchor="middle">22</text><text x="851.6" y="903" font-size="7.6" font-weight="bold" fill="#ffff00" text-anchor="middle">23</text><text x="897.4" y="903" font-size="7.6" font-weight="bold" fill="#ffff00" text-anchor="middle">00</text><text x="943.1" y="903" font-size="7.6" font-weight="bold" fill="#ffff00" text-anchor="middle">01</text><text x="988.9" y="903" font-size="7.6" font-weight="bold" fill="#ffff00" text-anchor="middle">02</text><text x="1034.6" y="903" font-size="7.6" font-weight="bold" fill="#ffff00" text-anchor="middle">03</text><text x="1080.3" y="903" font-size="7.6" font-weight="bold" fill="#ffff00" text-anchor="middle">04</text><path d="M554.3,891v1.5M565.8,891v1.5M577.2,891v3M588.6,891v1.5M600.1,891v1.5M611.5,891v1.5M622.9,891v3M634.4,891v1.5M645.8,891v1.5M657.2,891v1.5M668.7,891v3M680.1,891v1.5M691.6,891v1.5M703.0,891v1.5M714.4,891v3M725.9,891v1.5M737.3,891v1.5M748.7,891v1.5M760.2,891v3M771.6,891v1.5M783.0,891v1.5M794.5,891v1.5M805.9,891v3M817.3,891v1.5M828.8,891v1.5M840.2,891v1.5M851.6,891v3M863.1,891v1.5M874.5,891v1.5M885.9,891v1.5M897.4,891v3M908.8,891v1.5M920.2,891v1.5M931.7,891v1.5M943.1,891v3M954.6,891v1.5M966.0,891v1.5M977.4,891v1.5M988.9,891v3M1000.3,891v1.5M1011.7,891v1.5M1023.2,891v1.5M1034.6,891v3M1046.0,891v1.5M1057.5,891v1.5M1068.9,891v1.5M1080.3,891v3M1091.8,891v1.5" stroke="#ddd" stroke-width="1"/><g clip-path="url(#c3)" fill="none" stroke-linejoin="round"><polyline points="546.8,690.7 548.1,690.7 549.5,694.0 550.8,690.7 563.8,690.7 564.8,687.4 566.8,687.4 567.9,684.1 572.0,684.1 573.0,680.8 576.2,680.8 577.2,677.5 609.0,677.5 610.0,674.2 613.0,674.2 614.0,670.9 617.0,670.9 618.0,667.6 623.0,667.6 624.1,664.3 631.5,664.3 632.6,661.0 637.1,661.0 638.1,657.7 642.2,657.7 643.3,654.4 648.6,654.4 649.7,651.1 658.1,651.1 659.1,647.8 673.6,647.8 674.6,644.5 686.1,644.5 687.1,641.2 695.5,641.2 696.5,637.9 704.5,637.9 705.5,634.6 715.5,634.6 716.6,631.3 735.0,631.3 736.0,628.0 768.7,628.0 769.7,624.7 822.0,624.7 823.0,621.4 885.0,621.4 886.0,618.1 890.0,618.1 891.0,614.8 902.2,614.8 903.2,618.1 918.6,618.1 919.7,621.4 924.9,621.4 926.0,624.7 945.0,624.7 946.2,621.4 949.7,621.4 950.8,618.1 955.0,618.1 956.0,621.4 967.0,621.4 968.0,618.1 975.0,618.1 976.0,621.4 998.3,621.4 999.3,624.7 1016.9,624.7 1017.9,628.0 1091.0,628.0 1092.0,624.7 1097.0,624.7" stroke="#8c8cf8" stroke-width="1.7"/><polyline points="546.8,722.8 548.4,723.0 550.1,722.8 551.8,722.9 553.4,722.8 555.0,722.4 556.7,722.3 558.4,722.8 560.0,722.3 561.6,722.5 563.2,723.2 564.9,723.0 566.5,723.5 568.1,723.4 569.8,723.7 571.4,723.6 573.0,724.1 574.5,725.1 576.0,725.6 577.5,726.6 579.0,727.3 580.5,727.7 582.0,729.0 583.6,728.9 585.1,728.7 586.7,728.5 588.3,729.1 589.9,728.8 591.4,729.0 593.0,729.2 594.6,729.1 596.2,729.2 597.7,728.9 599.3,729.2 600.9,728.9 602.5,729.3 604.0,729.3 605.6,728.7 607.1,729.3 608.7,729.9 610.2,731.0 611.8,731.2 613.3,731.9 614.9,732.2 616.4,732.9 617.9,733.3 619.5,733.9 621.0,734.6 622.6,735.1 624.1,735.9 625.7,736.3 627.2,737.0 628.7,737.5 630.3,738.2 631.8,738.5 633.4,738.7 634.9,739.7 636.5,740.4 638.0,740.9 639.5,741.0 641.1,741.4 642.6,741.3 644.1,742.1 645.6,742.2 647.2,742.3 648.7,742.5 650.2,743.3 651.7,743.7 653.3,743.4 654.8,744.2 656.3,744.3 657.8,744.4 659.4,744.8 660.9,745.4 662.4,745.8 663.9,745.6 665.5,746.3 667.0,746.2 668.5,747.0 670.1,747.0 671.6,747.7 673.1,748.1 674.7,748.1 676.2,748.8 677.8,748.6 679.3,748.8 680.8,749.5 682.4,749.4 683.9,749.9 685.4,750.3 687.0,750.8 688.5,750.8 690.1,751.1 691.6,752.0 693.1,751.9 694.7,752.7 696.2,753.0 697.7,752.9 699.3,753.3 700.8,753.7 702.4,754.1 703.9,754.4 705.4,754.7 707.0,755.1 708.5,755.6 710.0,755.6 711.6,755.8 713.1,756.2 714.6,756.1 716.2,756.4 717.7,757.2 719.2,757.1 720.8,757.4 722.3,757.3 723.8,757.8 725.4,758.2 726.9,758.0 728.5,758.7 730.0,759.0 731.5,758.8 733.1,759.5 734.6,759.6 736.1,760.0 737.7,760.1 739.2,760.6 740.7,760.9 742.3,760.6 743.8,760.9 745.3,761.4 746.8,761.6 748.3,761.2 749.8,761.4 751.3,761.5 752.8,761.4 754.4,761.4 755.9,761.4 757.4,761.5 758.9,761.7 760.4,761.6 761.9,761.7 763.4,762.0 764.9,761.5 766.4,761.9 767.9,762.1 769.4,761.9 770.9,761.8 772.4,762.3 774.0,761.9 775.5,762.0 777.0,762.2 778.5,762.4 780.0,762.0 781.5,762.2 783.0,762.3 784.5,762.7 786.0,762.4 787.5,762.8 789.0,762.4 790.5,762.5 792.0,762.8 793.6,763.0 795.1,762.7 796.6,762.6 798.1,762.6 799.6,762.9 801.1,762.7 802.6,763.2 804.1,763.4 805.7,763.2 807.2,763.5 808.8,764.1 810.3,764.2 811.9,764.5 813.4,764.4 815.0,764.4 816.5,764.7 818.1,765.3 819.6,765.2 821.2,765.4 822.7,765.7 824.3,765.9 825.8,766.1 827.4,766.7 828.9,766.3 830.5,766.4 832.0,767.3 833.5,767.4 835.0,767.6 836.6,767.3 838.1,767.8 839.6,767.9 841.1,767.5 842.6,767.9 844.1,768.1 845.7,768.1 847.2,768.1 848.7,768.1 850.2,768.2 851.7,768.3 853.3,768.3 854.8,768.7 856.3,768.6 857.8,769.1 859.3,768.7 860.9,769.4 862.4,769.4 863.9,769.6 865.4,769.7 866.9,769.8 868.4,769.7 870.0,769.4 871.5,770.1 873.0,769.8 874.6,770.1 876.2,770.6 877.8,770.8 879.3,771.0 880.9,771.6 882.5,771.7 884.1,771.8 885.7,772.0 887.3,772.7 888.9,772.7 890.5,773.1 892.0,773.1 893.6,773.3 895.2,773.8 896.8,774.2 898.3,773.8 899.9,774.2 901.4,774.3 902.9,774.2 904.5,774.2 906.0,773.7 907.5,774.1 909.0,774.3 910.6,773.7 912.1,773.8 913.6,773.8 915.2,774.0 916.7,773.9 918.2,774.0 919.8,774.2 921.3,773.7 922.8,773.7 924.3,773.7 925.9,773.7 927.4,773.7 928.9,774.3 930.5,774.2 932.0,773.7 933.7,774.7 935.4,775.2 937.1,775.9 938.7,776.6 940.4,777.5 942.1,778.2 943.8,778.7 945.3,778.6 946.9,778.7 948.4,778.5 949.9,778.8 951.4,778.9 953.0,778.6 954.5,778.4 956.0,778.5 957.5,778.6 959.1,778.7 960.6,778.8 962.1,778.5 963.6,778.8 965.2,778.7 966.7,778.5 968.2,778.5 969.7,778.5 971.3,778.7 972.8,778.5 974.3,778.6 975.8,778.5 977.4,778.3 978.9,778.5 980.4,778.6 981.9,778.1 983.5,778.4 985.0,778.3 986.5,778.7 988.1,778.8 989.6,778.4 991.1,778.8 992.6,778.8 994.2,778.4 995.7,778.6 997.2,778.4 998.8,778.9 1000.3,778.8 1001.8,779.0 1003.3,779.0 1004.9,778.9 1006.4,779.0 1007.9,778.9 1009.4,778.6 1011.0,779.0 1012.5,778.6 1014.0,778.7 1015.6,779.2 1017.1,778.7 1018.6,778.8 1020.1,778.8 1021.7,779.4 1023.2,778.9 1024.7,778.9 1026.2,779.5 1027.8,779.0 1029.3,779.5 1030.8,779.4 1032.4,779.6 1033.9,779.7 1035.4,779.5 1036.9,779.6 1038.5,779.1 1040.0,779.7 1041.5,779.5 1043.0,779.7 1044.5,779.3 1046.0,779.8 1047.5,779.9 1049.0,779.4 1050.5,779.6 1052.0,779.8 1053.5,780.0 1055.0,779.6 1056.5,779.6 1058.0,779.7 1059.5,780.0 1061.0,780.1 1062.5,779.9 1064.0,779.9 1065.5,779.9 1067.0,779.9 1068.5,780.0 1070.0,779.8 1071.5,780.1 1073.0,780.5 1074.5,780.1 1076.0,780.4 1077.5,780.0 1079.0,780.4 1080.5,780.5 1082.0,780.4 1083.5,780.4 1085.0,780.4 1086.5,780.5 1088.0,780.7 1089.5,780.2 1091.0,780.2 1092.5,780.7 1094.0,780.8 1095.5,780.6 1097.0,780.6" stroke="#10cc10" stroke-width="2"/><polyline points="546.8,790.2 548.5,790.8 550.3,792.0 552.0,792.4 554.0,790.8 556.0,789.8 557.5,790.5 559.1,790.2 560.6,790.0 562.1,789.0 563.6,789.4 565.2,788.9 566.7,788.6 568.2,788.4 569.7,788.4 571.3,789.4 572.8,789.1 574.3,789.0 575.8,788.8 577.4,787.7 578.9,787.8 580.4,788.2 581.9,788.2 583.5,788.3 585.0,788.2 586.5,787.0 588.0,787.8 589.6,787.9 591.1,787.7 592.6,787.2 594.1,787.7 595.6,787.1 597.2,788.5 598.7,788.4 600.2,787.9 601.7,787.5 603.2,788.5 604.8,788.0 606.3,788.5 607.8,788.5 609.3,788.0 610.8,787.9 612.4,788.2 613.9,787.9 615.4,787.5 616.9,787.8 618.4,788.6 620.0,787.4 621.5,787.5 623.0,788.4 624.5,787.9 626.0,788.3 627.6,788.2 629.1,788.0 630.6,789.1 632.1,787.9 633.6,788.2 635.2,787.9 636.7,788.6 638.2,788.1 639.7,788.2 641.2,788.9 642.8,788.2 644.3,788.6 645.8,789.2 647.3,787.9 648.8,787.9 650.4,788.2 651.9,789.1 653.4,788.9 654.9,788.3 656.4,788.5 658.0,788.2 659.5,788.7 661.0,788.1 662.5,789.2 664.0,789.6 665.5,789.8 667.1,789.5 668.6,789.9 670.1,788.5 671.6,789.0 673.1,790.2 674.6,789.9 676.1,789.4 677.6,790.4 679.2,789.9 680.7,790.3 682.2,789.5 683.7,789.5 685.2,789.9 686.7,789.5 688.2,790.0 689.7,791.0 691.3,790.1 692.8,789.6 694.3,789.8 695.8,790.0 697.3,791.1 698.8,790.5 700.3,790.5 701.8,790.2 703.4,791.7 704.9,790.9 706.4,790.6 707.9,790.5 709.4,790.5 710.9,790.8 712.4,791.7 713.9,790.9 715.5,790.8 717.0,791.6 718.5,791.3 720.0,792.6 721.5,791.2 723.0,791.9 724.5,792.3 726.0,791.8 727.5,792.7 729.0,791.9 730.5,791.6 732.0,791.9 733.5,791.3 735.0,792.0 736.5,791.7 738.0,792.8 739.5,792.7 741.0,792.2 742.5,791.5 744.0,791.9 745.5,791.9 747.0,791.9 748.5,792.0 750.0,793.0 751.5,791.9 753.0,791.8 754.5,793.2 756.0,792.6 757.5,793.4 759.0,792.4 760.5,793.3 762.1,792.9 763.6,793.2 765.1,793.1 766.6,792.7 768.1,792.1 769.6,792.4 771.1,793.4 772.6,793.5 774.1,793.6 775.6,792.7 777.1,793.2 778.6,793.5 780.1,793.3 781.6,793.6 783.1,793.1 784.6,793.4 786.1,793.5 787.6,792.8 789.1,793.9 790.6,794.0 792.1,792.6 793.6,794.1 795.1,794.1 796.6,793.6 798.1,792.7 799.6,794.1 801.1,792.9 802.6,794.2 804.1,793.8 805.6,793.0 807.1,793.2 808.6,794.0 810.2,794.0 811.7,794.4 813.2,794.7 814.7,793.7 816.2,793.4 817.7,794.9 819.2,793.6 820.7,795.0 822.2,793.9 823.7,795.1 825.3,795.1 826.8,795.3 828.3,794.9 829.8,795.5 831.3,794.5 832.8,795.3 834.3,794.8 835.8,795.8 837.3,795.7 838.8,795.3 840.4,795.5 841.9,794.7 843.4,794.8 844.9,795.8 846.4,795.7 847.9,796.4 849.4,796.1 850.9,795.4 852.4,795.8 853.9,796.5 855.5,796.2 857.0,795.5 858.5,796.9 860.0,796.9 861.5,795.8 863.0,796.7 864.6,796.6 866.1,797.3 867.7,796.7 869.2,796.7 870.8,797.2 872.3,798.1 873.8,796.9 875.4,797.0 876.9,798.0 878.5,798.5 880.0,798.0 881.6,798.0 883.1,798.8 884.7,798.8 886.2,797.8 887.7,799.3 889.3,798.3 890.8,798.6 892.4,799.6 893.9,799.0 895.5,799.8 897.0,798.9 898.5,800.2 900.0,799.2 901.6,799.4 903.1,800.1 904.6,800.0 906.1,800.5 907.7,801.3 909.2,801.2 910.7,800.2 912.2,800.9 913.7,801.4 915.3,801.5 916.8,802.1 918.3,801.9 919.8,801.4 921.3,801.8 922.9,803.0 924.4,802.4 925.9,803.2 927.4,803.7 929.0,803.3 930.5,803.6 932.0,803.7 933.5,803.6 935.0,804.9 936.5,804.6 938.0,805.7 939.5,805.1 941.0,806.3 942.5,806.6 944.0,806.7 945.5,806.5 947.1,806.1 948.6,807.2 950.1,806.6 951.6,807.2 953.2,806.4 954.7,806.4 956.2,806.6 957.7,807.7 959.3,806.8 960.8,808.0 962.3,807.2 963.8,807.6 965.4,807.4 966.9,807.9 968.4,807.1 969.9,807.7 971.5,808.6 973.0,807.5 974.5,808.2 976.1,807.7 977.6,807.7 979.2,807.2 980.7,807.2 982.3,808.7 983.8,808.5 985.3,808.5 986.9,808.5 988.4,808.7 990.0,807.5 991.5,808.1 993.1,808.0 994.6,808.1 996.2,808.7 997.7,808.4 999.2,808.7 1000.8,807.4 1002.3,808.2 1003.9,808.3 1005.4,808.4 1007.0,808.2 1008.5,808.5 1010.2,808.3 1011.9,809.9 1013.6,809.6 1015.3,810.6 1017.0,811.6 1018.5,811.3 1020.0,810.7 1021.5,810.6 1023.0,810.8 1024.6,811.3 1026.1,811.9 1027.6,811.8 1029.1,811.0 1030.6,811.0 1032.1,811.7 1033.6,810.8 1035.1,811.1 1036.6,810.4 1038.1,810.7 1039.7,811.3 1041.2,811.6 1042.7,811.5 1044.2,811.1 1045.7,812.0 1047.2,811.5 1048.7,810.8 1050.2,810.7 1051.7,812.1 1053.2,812.2 1054.8,812.1 1056.3,811.6 1057.8,811.1 1059.3,810.8 1060.8,811.1 1062.3,811.0 1063.8,812.2 1065.3,812.2 1066.8,812.0 1068.3,811.0 1069.9,811.2 1071.4,811.3 1072.9,812.3 1074.4,811.1 1075.9,812.1 1077.4,811.9 1078.9,811.7 1080.4,812.4 1081.9,811.3 1083.4,811.8 1085.0,811.2 1086.5,811.1 1088.0,811.0 1089.5,811.5 1091.0,811.2 1092.5,810.6 1094.0,811.7 1095.5,810.1 1097.0,810.6" stroke="#d020d0" stroke-width="1.8"/><path d="M546,883.2H897.5" stroke="#ff0000" stroke-width="2.8"/><path d="M897,886.3H1097.5" stroke="#ff0000" stroke-width="2.2"/><path d="M668.3,857V889" stroke="#ffff00" stroke-width="1.4" stroke-dasharray="1.2 1.2"/></g><text x="667.5" y="854.6" font-size="9" fill="#e6e63c" text-anchor="middle">Sun Set</text></svg>
<div class="t " style="left:1118.5px;top:403.0px;font-size:16px;line-height:16px;color:#ffff00;font-family:'Liberation Serif',serif;">S</div>
<div class="t " style="left:1118.5px;top:427.5px;font-size:16px;line-height:16px;color:#ffff00;font-family:'Liberation Serif',serif;">E</div>
<div class="t " style="left:1118.5px;top:453.6px;font-size:16px;line-height:16px;color:#ffff00;font-family:'Liberation Serif',serif;">N</div>
<div class="t " style="left:1118.5px;top:479.0px;font-size:16px;line-height:16px;color:#ffff00;font-family:'Liberation Serif',serif;">W</div>
<div class="t " style="left:1118.5px;top:505.3px;font-size:16px;line-height:16px;color:#ffff00;font-family:'Liberation Serif',serif;">S</div>
<div class="t " style="left:1136.4px;top:455.0px;font-size:14px;line-height:14px;color:#ffff00;"><span class="sx" style="transform:scaleX(1.070)">208</span></div>
</body></html>
